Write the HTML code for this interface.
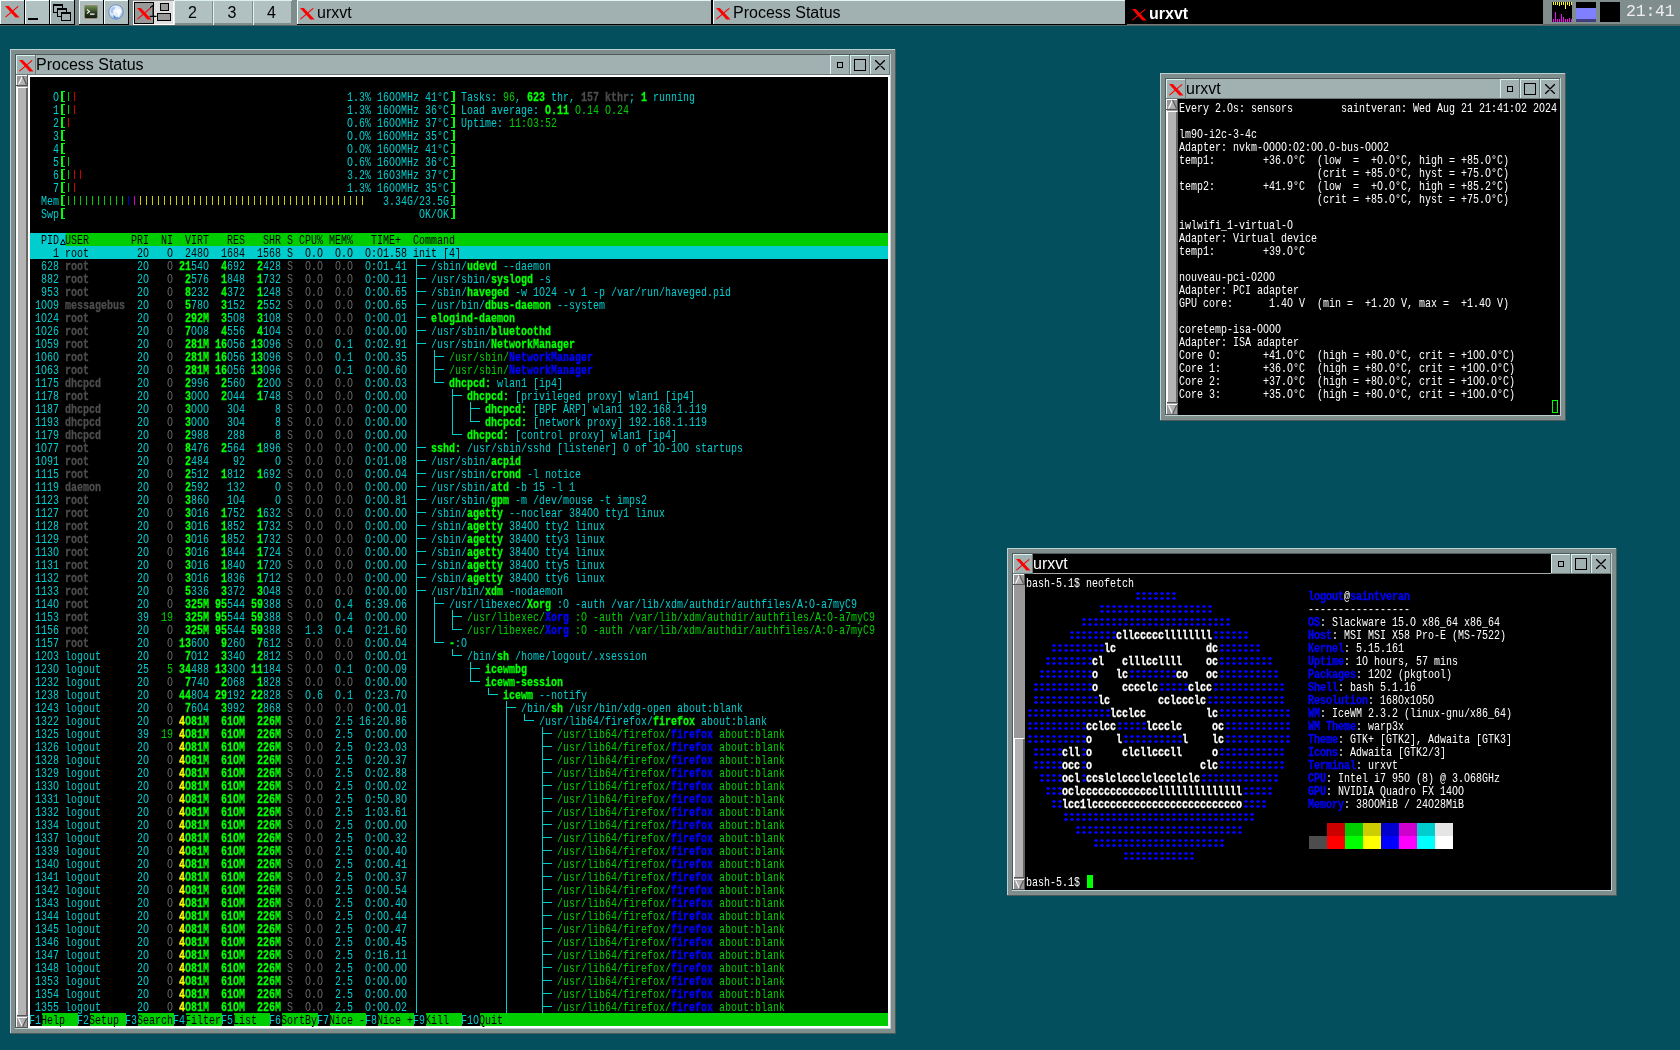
<!DOCTYPE html><html><head><meta charset="utf-8"><style>
*{margin:0;padding:0}
html,body{width:1680px;height:1050px;overflow:hidden;background:#034f5e;position:relative}
div{position:absolute}
svg{position:absolute}
.tt{font:16px/20px "Liberation Sans",sans-serif;white-space:pre;will-change:transform}
.tm{transform:scaleX(0.740620);transform-origin:0 0;font-family:"Liberation Mono",monospace;font-size:13.5px;line-height:13px;white-space:pre;width:1200px;height:1px}
.tm p{position:absolute;left:0;height:13px;margin:0}
.lbl{font:16px/24px "Liberation Sans",sans-serif;white-space:pre;text-align:center;will-change:transform}
</style></head><body><div style="left:0px;top:0px;width:1680px;height:25px;background:#7f8d8d;"></div><div style="left:0px;top:25px;width:1680px;height:1px;background:#566464;"></div><div style="left:0px;top:0px;width:25px;height:25px;background:#a3b3b3;"></div><div style="left:0px;top:0px;width:25px;height:1px;background:#f4ffff;"></div><div style="left:0px;top:0px;width:1px;height:25px;background:#f4ffff;"></div><div style="left:0px;top:24px;width:25px;height:1px;background:#000;"></div><div style="left:24px;top:0px;width:1px;height:25px;background:#000;"></div><svg style="position:absolute;left:5px;top:6px" width="16" height="12" viewBox="0 0 16 12"><polygon points="0,0 3.8,0 14.6,11.5 10.4,11.5" fill="#f00"/><line x1="0.4" y1="11.2" x2="13.2" y2="0.4" stroke="#f00" stroke-width="1.1"/></svg><div style="left:25px;top:0px;width:25px;height:25px;background:#b1c0c0;"></div><div style="left:25px;top:0px;width:25px;height:1px;background:#f4ffff;"></div><div style="left:25px;top:0px;width:1px;height:25px;background:#f4ffff;"></div><div style="left:25px;top:24px;width:25px;height:1px;background:#000;"></div><div style="left:49px;top:0px;width:1px;height:25px;background:#000;"></div><div style="left:28px;top:18px;width:10px;height:2px;background:#000;"></div><div style="left:50px;top:0px;width:25px;height:25px;background:#a1b1b1;"></div><div style="left:50px;top:0px;width:25px;height:1px;background:#f4ffff;"></div><div style="left:50px;top:0px;width:1px;height:25px;background:#f4ffff;"></div><div style="left:50px;top:24px;width:25px;height:1px;background:#000;"></div><div style="left:74px;top:0px;width:1px;height:25px;background:#000;"></div><div style="left:53px;top:4px;width:10px;height:9px;background:#a1b1b1;border:1px solid #000;border-top-width:2px;box-sizing:border-box"></div><div style="left:57px;top:8px;width:10px;height:9px;background:#a1b1b1;border:1px solid #000;border-top-width:2px;box-sizing:border-box"></div><div style="left:61px;top:12px;width:10px;height:9px;background:#a1b1b1;border:1px solid #000;border-top-width:2px;box-sizing:border-box"></div><div style="left:75px;top:0px;width:4px;height:25px;background:#7f8d8d;"></div><div style="left:79px;top:0px;width:25px;height:25px;background:#adbdbd;"></div><div style="left:79px;top:0px;width:25px;height:1px;background:#f4ffff;"></div><div style="left:79px;top:0px;width:1px;height:25px;background:#f4ffff;"></div><div style="left:79px;top:24px;width:25px;height:1px;background:#000;"></div><div style="left:103px;top:0px;width:1px;height:25px;background:#000;"></div><svg style="position:absolute;left:83px;top:4px" width="16" height="16" viewBox="0 0 16 16"><defs><linearGradient id="tg" x1="0" y1="0" x2="0" y2="1"><stop offset="0" stop-color="#6f8f52"/><stop offset="0.55" stop-color="#2c3d22"/><stop offset="1" stop-color="#141c10"/></linearGradient><radialGradient id="gg" cx="0.4" cy="0.35" r="0.7"><stop offset="0" stop-color="#ffffff"/><stop offset="0.6" stop-color="#d6e6f8"/><stop offset="1" stop-color="#8fb3e6"/></radialGradient></defs><rect x="0.5" y="0.5" width="15" height="15" rx="2.5" fill="#8a8a80" stroke="#bdbdb2" stroke-width="1"/><rect x="2" y="2" width="12" height="12" rx="1" fill="url(#tg)"/><path d="M4 5.5L6.5 7.5L4 9.5" stroke="#f4f4f4" stroke-width="1.1" fill="none"/><rect x="7" y="9.5" width="4.5" height="1.3" fill="#f4f4f4"/></svg><div style="left:104px;top:0px;width:25px;height:25px;background:#adbdbd;"></div><div style="left:104px;top:0px;width:25px;height:1px;background:#f4ffff;"></div><div style="left:104px;top:0px;width:1px;height:25px;background:#f4ffff;"></div><div style="left:104px;top:24px;width:25px;height:1px;background:#000;"></div><div style="left:128px;top:0px;width:1px;height:25px;background:#000;"></div><svg style="position:absolute;left:108px;top:4px" width="16" height="16" viewBox="0 0 16 16"><circle cx="8" cy="8" r="7.2" fill="url(#gg)" stroke="#6a90c8" stroke-width="1"/><path d="M3.2 4.5Q5 2.6 7.6 3.2L7 5.2L5.2 6.2L5.6 8.2L4.4 9.8L2.6 8.2Q2.4 6 3.2 4.5Z" fill="#a9c6ee"/><path d="M9.5 5.5L12.5 5L13.6 7.5L12.2 10L11 13L9.4 12.6L9.8 9.6L8.6 8.4Z" fill="#ffffff"/><path d="M5.5 10.5Q7.5 14.5 11 13.6Q8.6 15.4 5.5 13.6Z" fill="#3f7fd0"/></svg><div style="left:129px;top:0px;width:4px;height:25px;background:#7f8d8d;"></div><div style="left:133px;top:0px;width:41px;height:25px;background:#ffffff;"></div><div style="left:133px;top:0px;width:41px;height:1px;background:#999;"></div><div style="left:134px;top:1px;width:39px;height:23px;background:#e0e0e0;"></div><div style="left:134px;top:2px;width:20px;height:22px;background:#999;border:1px solid #000;box-sizing:border-box"></div><svg style="position:absolute;left:137px;top:8px" width="16" height="12" viewBox="0 0 16 12"><polygon points="0,0 3.8,0 14.6,11.5 10.4,11.5" fill="#f00"/><line x1="0.4" y1="11.2" x2="13.2" y2="0.4" stroke="#f00" stroke-width="1.1"/></svg><div class="lbl" style="left:146px;top:0px;width:14px;color:#000">1</div><div style="left:160px;top:3px;width:9px;height:8px;background:#999;border:1px solid #000;box-sizing:border-box"></div><div style="left:157px;top:13px;width:14px;height:8px;background:#999;border:1px solid #000;box-sizing:border-box"></div><div style="left:174px;top:0px;width:39px;height:25px;background:#dff0f0;"></div><div style="left:175px;top:1px;width:38px;height:24px;background:#7f8d8d;"></div><div style="left:175px;top:1px;width:37px;height:22px;background:#b1c0c0;"></div><div class="lbl" style="left:173px;top:1px;width:39px;color:#000">2</div><div style="left:213px;top:0px;width:40px;height:25px;background:#dff0f0;"></div><div style="left:214px;top:1px;width:39px;height:24px;background:#7f8d8d;"></div><div style="left:214px;top:1px;width:38px;height:22px;background:#b1c0c0;"></div><div class="lbl" style="left:212px;top:1px;width:40px;color:#000">3</div><div style="left:253px;top:0px;width:39px;height:25px;background:#dff0f0;"></div><div style="left:254px;top:1px;width:38px;height:24px;background:#7f8d8d;"></div><div style="left:254px;top:1px;width:37px;height:22px;background:#b1c0c0;"></div><div class="lbl" style="left:252px;top:1px;width:39px;color:#000">4</div><div style="left:292px;top:0px;width:5px;height:25px;background:#7f8d8d;"></div><div style="left:297px;top:0px;width:416px;height:25px;background:#a1b1b1;"></div><div style="left:297px;top:0px;width:416px;height:1px;background:#e4f4f4;"></div><div style="left:297px;top:0px;width:1px;height:25px;background:#f4ffff;"></div><div style="left:297px;top:24px;width:416px;height:1px;background:#000;"></div><div style="left:711px;top:0px;width:2px;height:25px;background:#000;"></div><svg style="position:absolute;left:300px;top:8px" width="16" height="12" viewBox="0 0 16 12"><polygon points="0,0 3.8,0 14.6,11.5 10.4,11.5" fill="#f00"/><line x1="0.4" y1="11.2" x2="13.2" y2="0.4" stroke="#f00" stroke-width="1.1"/></svg><div class="tt" style="left:317px;top:3px;color:#000">urxvt</div><div style="left:713px;top:0px;width:414px;height:25px;background:#a1b1b1;"></div><div style="left:713px;top:0px;width:414px;height:1px;background:#e4f4f4;"></div><div style="left:713px;top:0px;width:1px;height:25px;background:#f4ffff;"></div><div style="left:713px;top:24px;width:414px;height:1px;background:#000;"></div><div style="left:1125px;top:0px;width:2px;height:25px;background:#000;"></div><svg style="position:absolute;left:716px;top:8px" width="16" height="12" viewBox="0 0 16 12"><polygon points="0,0 3.8,0 14.6,11.5 10.4,11.5" fill="#f00"/><line x1="0.4" y1="11.2" x2="13.2" y2="0.4" stroke="#f00" stroke-width="1.1"/></svg><div class="tt" style="left:733px;top:3px;color:#000">Process Status</div><div style="left:1127px;top:0px;width:416px;height:25px;background:#000;"></div><div style="left:1127px;top:24px;width:416px;height:1px;background:#777;"></div><svg style="position:absolute;left:1132px;top:9px" width="16" height="12" viewBox="0 0 16 12"><polygon points="0,0 3.8,0 14.6,11.5 10.4,11.5" fill="#f00"/><line x1="0.4" y1="11.2" x2="13.2" y2="0.4" stroke="#f00" stroke-width="1.1"/></svg><div class="tt" style="left:1149px;top:4px;color:#fff;font-weight:bold">urxvt</div><div style="left:1543px;top:0px;width:137px;height:25px;background:#7f8d8d;"></div><div style="left:1543px;top:24px;width:137px;height:1px;background:#5a6666;"></div><div style="left:1552px;top:2px;width:20px;height:20px;background:#000;"></div><div style="left:1553px;top:2px;width:1px;height:3px;background:#ff0;"></div><div style="left:1555px;top:2px;width:1px;height:3px;background:#ff0;"></div><div style="left:1557px;top:2px;width:1px;height:3px;background:#ff0;"></div><div style="left:1559px;top:2px;width:1px;height:4px;background:#ff0;"></div><div style="left:1561px;top:2px;width:1px;height:3px;background:#ff0;"></div><div style="left:1563px;top:2px;width:1px;height:3px;background:#ff0;"></div><div style="left:1565px;top:2px;width:1px;height:7px;background:#ff0;"></div><div style="left:1567px;top:2px;width:1px;height:3px;background:#ff0;"></div><div style="left:1569px;top:2px;width:1px;height:4px;background:#ff0;"></div><div style="left:1571px;top:2px;width:1px;height:3px;background:#ff0;"></div><div style="left:1553px;top:19px;width:1px;height:3px;background:#f0f;"></div><div style="left:1555px;top:12px;width:1px;height:10px;background:#f0f;"></div><div style="left:1557px;top:19px;width:1px;height:3px;background:#f0f;"></div><div style="left:1559px;top:19px;width:1px;height:3px;background:#f0f;"></div><div style="left:1561px;top:14px;width:1px;height:8px;background:#f0f;"></div><div style="left:1563px;top:17px;width:1px;height:5px;background:#f0f;"></div><div style="left:1565px;top:19px;width:1px;height:3px;background:#f0f;"></div><div style="left:1567px;top:19px;width:1px;height:3px;background:#f0f;"></div><div style="left:1569px;top:18px;width:1px;height:4px;background:#f0f;"></div><div style="left:1571px;top:19px;width:1px;height:3px;background:#f0f;"></div><div style="left:1576px;top:2px;width:20px;height:20px;background:#000;"></div><div style="left:1576px;top:8px;width:20px;height:11px;background:#8080ff;"></div><div style="left:1576px;top:19px;width:20px;height:3px;background:#404080;"></div><div style="left:1600px;top:2px;width:20px;height:20px;background:#000;"></div><div style="left:1626px;top:0px;font:16.5px/24px 'Liberation Mono',monospace;color:#eeeeee;letter-spacing:-0.2px;will-change:transform">21:41</div><div style="left:10px;top:49px;width:886px;height:985px;background:#7f8d8d;"></div><div style="left:10px;top:49px;width:886px;height:1px;background:#bad2d2;"></div><div style="left:10px;top:49px;width:1px;height:985px;background:#bad2d2;"></div><div style="left:10px;top:1033px;width:886px;height:1px;background:#4f5b5b;"></div><div style="left:895px;top:49px;width:1px;height:985px;background:#4f5b5b;"></div><div style="left:15px;top:54px;width:876px;height:1px;background:#4f5b5b;"></div><div style="left:15px;top:54px;width:1px;height:975px;background:#4f5b5b;"></div><div style="left:15px;top:1028px;width:876px;height:1px;background:#bad2d2;"></div><div style="left:890px;top:54px;width:1px;height:975px;background:#bad2d2;"></div><div style="left:16px;top:55px;width:874px;height:20px;background:#a1b1b1;"></div><div style="left:16px;top:74px;width:874px;height:1px;background:#6c7a7a;"></div><div style="left:16px;top:55px;width:20px;height:20px;background:#a1b1b1;"></div><div style="left:16px;top:55px;width:20px;height:1px;background:#d9f2f2;"></div><div style="left:16px;top:55px;width:1px;height:20px;background:#d9f2f2;"></div><div style="left:16px;top:74px;width:20px;height:1px;background:#6c7a7a;"></div><div style="left:35px;top:55px;width:1px;height:20px;background:#6c7a7a;"></div><svg style="position:absolute;left:19px;top:60px" width="16" height="12" viewBox="0 0 16 12"><polygon points="0,0 3.8,0 14.6,11.5 10.4,11.5" fill="#f00"/><line x1="0.4" y1="11.2" x2="13.2" y2="0.4" stroke="#f00" stroke-width="1.1"/></svg><div class="tt" style="left:36px;top:55px;color:#000">Process Status</div><div style="left:830px;top:55px;width:20px;height:20px;background:#a1b1b1;"></div><div style="left:830px;top:55px;width:20px;height:1px;background:#d9f2f2;"></div><div style="left:830px;top:55px;width:1px;height:20px;background:#d9f2f2;"></div><div style="left:830px;top:74px;width:20px;height:1px;background:#6c7a7a;"></div><div style="left:849px;top:55px;width:1px;height:20px;background:#6c7a7a;"></div><div style="left:837px;top:62px;width:6px;height:6px;background:transparent;border:1.5px solid #000;box-sizing:border-box"></div><div style="left:850px;top:55px;width:20px;height:20px;background:#a1b1b1;"></div><div style="left:850px;top:55px;width:20px;height:1px;background:#d9f2f2;"></div><div style="left:850px;top:55px;width:1px;height:20px;background:#d9f2f2;"></div><div style="left:850px;top:74px;width:20px;height:1px;background:#6c7a7a;"></div><div style="left:869px;top:55px;width:1px;height:20px;background:#6c7a7a;"></div><div style="left:854px;top:59px;width:12px;height:12px;background:transparent;border:1.5px solid #000;box-sizing:border-box"></div><div style="left:870px;top:55px;width:20px;height:20px;background:#a1b1b1;"></div><div style="left:870px;top:55px;width:20px;height:1px;background:#d9f2f2;"></div><div style="left:870px;top:55px;width:1px;height:20px;background:#d9f2f2;"></div><div style="left:870px;top:74px;width:20px;height:1px;background:#6c7a7a;"></div><div style="left:889px;top:55px;width:1px;height:20px;background:#6c7a7a;"></div><svg style="position:absolute;left:875px;top:60px" width="10" height="10" viewBox="0 0 10 10"><path d="M0.5 0.5L9.5 9.5M9.5 0.5L0.5 9.5" stroke="#000" stroke-width="1.4" stroke-linecap="round"/></svg><div style="left:16px;top:75px;width:874px;height:953px;background:#fff;"></div><div style="left:16px;top:75px;width:12px;height:953px;background:#999999;"></div><div style="left:16px;top:75px;width:1px;height:953px;background:#fff;"></div><div style="left:16px;top:75px;width:12px;height:1px;background:#fff;"></div><div style="left:27px;top:75px;width:1px;height:11px;background:#555555;"></div><div style="left:16px;top:85px;width:12px;height:1px;background:#555555;"></div><svg style="position:absolute;left:16px;top:75px" width="12" height="11" viewBox="0 0 12 11"><polygon points="6.5,1 10.5,9.5 2.5,9.5" fill="#b4b4b4"/><path d="M6.5 1L2.5 9.5" stroke="#fff" stroke-width="1.1"/><path d="M6.5 1L10.5 9.5" stroke="#555555" stroke-width="1.1"/></svg><div style="left:16px;top:1017px;width:12px;height:1px;background:#fff;"></div><div style="left:27px;top:1017px;width:1px;height:11px;background:#555555;"></div><div style="left:16px;top:1027px;width:12px;height:1px;background:#555555;"></div><svg style="position:absolute;left:16px;top:1017px" width="12" height="11" viewBox="0 0 12 11"><polygon points="2.5,1.5 10.5,1.5 6.5,10" fill="#b4b4b4"/><path d="M2.5 1.5L6.5 10" stroke="#fff" stroke-width="1.1"/><path d="M10.5 1.5L6.5 10" stroke="#555555" stroke-width="1.1"/></svg><div style="left:17px;top:87px;width:11px;height:929px;background:#b4b4b4;"></div><div style="left:26px;top:88px;width:2px;height:928px;background:#666;"></div><div style="left:17px;top:87px;width:10px;height:1px;background:#fff;"></div><div style="left:17px;top:87px;width:1px;height:929px;background:#fff;"></div><div style="left:17px;top:1015px;width:11px;height:1px;background:#555555;"></div><div style="left:30px;top:77px;width:858px;height:949px;background:#000;"></div><div style="left:1160px;top:73px;width:406px;height:348px;background:#7f8d8d;"></div><div style="left:1160px;top:73px;width:406px;height:1px;background:#bad2d2;"></div><div style="left:1160px;top:73px;width:1px;height:348px;background:#bad2d2;"></div><div style="left:1160px;top:420px;width:406px;height:1px;background:#4f5b5b;"></div><div style="left:1565px;top:73px;width:1px;height:348px;background:#4f5b5b;"></div><div style="left:1165px;top:78px;width:396px;height:1px;background:#4f5b5b;"></div><div style="left:1165px;top:78px;width:1px;height:338px;background:#4f5b5b;"></div><div style="left:1165px;top:415px;width:396px;height:1px;background:#bad2d2;"></div><div style="left:1560px;top:78px;width:1px;height:338px;background:#bad2d2;"></div><div style="left:1166px;top:79px;width:394px;height:20px;background:#a1b1b1;"></div><div style="left:1166px;top:98px;width:394px;height:1px;background:#6c7a7a;"></div><div style="left:1166px;top:79px;width:20px;height:20px;background:#a1b1b1;"></div><div style="left:1166px;top:79px;width:20px;height:1px;background:#d9f2f2;"></div><div style="left:1166px;top:79px;width:1px;height:20px;background:#d9f2f2;"></div><div style="left:1166px;top:98px;width:20px;height:1px;background:#6c7a7a;"></div><div style="left:1185px;top:79px;width:1px;height:20px;background:#6c7a7a;"></div><svg style="position:absolute;left:1169px;top:84px" width="16" height="12" viewBox="0 0 16 12"><polygon points="0,0 3.8,0 14.6,11.5 10.4,11.5" fill="#f00"/><line x1="0.4" y1="11.2" x2="13.2" y2="0.4" stroke="#f00" stroke-width="1.1"/></svg><div class="tt" style="left:1186px;top:79px;color:#000">urxvt</div><div style="left:1500px;top:79px;width:20px;height:20px;background:#a1b1b1;"></div><div style="left:1500px;top:79px;width:20px;height:1px;background:#d9f2f2;"></div><div style="left:1500px;top:79px;width:1px;height:20px;background:#d9f2f2;"></div><div style="left:1500px;top:98px;width:20px;height:1px;background:#6c7a7a;"></div><div style="left:1519px;top:79px;width:1px;height:20px;background:#6c7a7a;"></div><div style="left:1507px;top:86px;width:6px;height:6px;background:transparent;border:1.5px solid #000;box-sizing:border-box"></div><div style="left:1520px;top:79px;width:20px;height:20px;background:#a1b1b1;"></div><div style="left:1520px;top:79px;width:20px;height:1px;background:#d9f2f2;"></div><div style="left:1520px;top:79px;width:1px;height:20px;background:#d9f2f2;"></div><div style="left:1520px;top:98px;width:20px;height:1px;background:#6c7a7a;"></div><div style="left:1539px;top:79px;width:1px;height:20px;background:#6c7a7a;"></div><div style="left:1524px;top:83px;width:12px;height:12px;background:transparent;border:1.5px solid #000;box-sizing:border-box"></div><div style="left:1540px;top:79px;width:20px;height:20px;background:#a1b1b1;"></div><div style="left:1540px;top:79px;width:20px;height:1px;background:#d9f2f2;"></div><div style="left:1540px;top:79px;width:1px;height:20px;background:#d9f2f2;"></div><div style="left:1540px;top:98px;width:20px;height:1px;background:#6c7a7a;"></div><div style="left:1559px;top:79px;width:1px;height:20px;background:#6c7a7a;"></div><svg style="position:absolute;left:1545px;top:84px" width="10" height="10" viewBox="0 0 10 10"><path d="M0.5 0.5L9.5 9.5M9.5 0.5L0.5 9.5" stroke="#000" stroke-width="1.4" stroke-linecap="round"/></svg><div style="left:1166px;top:99px;width:394px;height:316px;background:#000;"></div><div style="left:1166px;top:99px;width:12px;height:316px;background:#999999;"></div><div style="left:1166px;top:99px;width:1px;height:316px;background:#fff;"></div><div style="left:1166px;top:99px;width:12px;height:1px;background:#fff;"></div><div style="left:1177px;top:99px;width:1px;height:11px;background:#555555;"></div><div style="left:1166px;top:109px;width:12px;height:1px;background:#555555;"></div><svg style="position:absolute;left:1166px;top:99px" width="12" height="11" viewBox="0 0 12 11"><polygon points="6.5,1 10.5,9.5 2.5,9.5" fill="#b4b4b4"/><path d="M6.5 1L2.5 9.5" stroke="#fff" stroke-width="1.1"/><path d="M6.5 1L10.5 9.5" stroke="#555555" stroke-width="1.1"/></svg><div style="left:1166px;top:404px;width:12px;height:1px;background:#fff;"></div><div style="left:1177px;top:404px;width:1px;height:11px;background:#555555;"></div><div style="left:1166px;top:414px;width:12px;height:1px;background:#555555;"></div><svg style="position:absolute;left:1166px;top:404px" width="12" height="11" viewBox="0 0 12 11"><polygon points="2.5,1.5 10.5,1.5 6.5,10" fill="#b4b4b4"/><path d="M2.5 1.5L6.5 10" stroke="#fff" stroke-width="1.1"/><path d="M10.5 1.5L6.5 10" stroke="#555555" stroke-width="1.1"/></svg><div style="left:1167px;top:111px;width:11px;height:292px;background:#b4b4b4;"></div><div style="left:1176px;top:112px;width:2px;height:291px;background:#666;"></div><div style="left:1167px;top:111px;width:10px;height:1px;background:#fff;"></div><div style="left:1167px;top:111px;width:1px;height:292px;background:#fff;"></div><div style="left:1167px;top:402px;width:11px;height:1px;background:#555555;"></div><div style="left:1007px;top:548px;width:610px;height:348px;background:#7f8d8d;"></div><div style="left:1007px;top:548px;width:610px;height:1px;background:#bad2d2;"></div><div style="left:1007px;top:548px;width:1px;height:348px;background:#bad2d2;"></div><div style="left:1007px;top:895px;width:610px;height:1px;background:#4f5b5b;"></div><div style="left:1616px;top:548px;width:1px;height:348px;background:#4f5b5b;"></div><div style="left:1012px;top:553px;width:600px;height:1px;background:#4f5b5b;"></div><div style="left:1012px;top:553px;width:1px;height:338px;background:#4f5b5b;"></div><div style="left:1012px;top:890px;width:600px;height:1px;background:#bad2d2;"></div><div style="left:1611px;top:553px;width:1px;height:338px;background:#bad2d2;"></div><div style="left:1013px;top:554px;width:598px;height:20px;background:#000;"></div><div style="left:1013px;top:573px;width:598px;height:1px;background:#a8a8a8;"></div><div style="left:1013px;top:554px;width:20px;height:20px;background:#a1b1b1;"></div><div style="left:1013px;top:554px;width:20px;height:1px;background:#d9f2f2;"></div><div style="left:1013px;top:554px;width:1px;height:20px;background:#d9f2f2;"></div><div style="left:1013px;top:573px;width:20px;height:1px;background:#6c7a7a;"></div><div style="left:1032px;top:554px;width:1px;height:20px;background:#6c7a7a;"></div><svg style="position:absolute;left:1016px;top:559px" width="16" height="12" viewBox="0 0 16 12"><polygon points="0,0 3.8,0 14.6,11.5 10.4,11.5" fill="#f00"/><line x1="0.4" y1="11.2" x2="13.2" y2="0.4" stroke="#f00" stroke-width="1.1"/></svg><div class="tt" style="left:1033px;top:554px;color:#fff">urxvt</div><div style="left:1551px;top:554px;width:20px;height:20px;background:#a1b1b1;"></div><div style="left:1551px;top:554px;width:20px;height:1px;background:#d9f2f2;"></div><div style="left:1551px;top:554px;width:1px;height:20px;background:#d9f2f2;"></div><div style="left:1551px;top:573px;width:20px;height:1px;background:#6c7a7a;"></div><div style="left:1570px;top:554px;width:1px;height:20px;background:#6c7a7a;"></div><div style="left:1558px;top:561px;width:6px;height:6px;background:transparent;border:1.5px solid #000;box-sizing:border-box"></div><div style="left:1571px;top:554px;width:20px;height:20px;background:#a1b1b1;"></div><div style="left:1571px;top:554px;width:20px;height:1px;background:#d9f2f2;"></div><div style="left:1571px;top:554px;width:1px;height:20px;background:#d9f2f2;"></div><div style="left:1571px;top:573px;width:20px;height:1px;background:#6c7a7a;"></div><div style="left:1590px;top:554px;width:1px;height:20px;background:#6c7a7a;"></div><div style="left:1575px;top:558px;width:12px;height:12px;background:transparent;border:1.5px solid #000;box-sizing:border-box"></div><div style="left:1591px;top:554px;width:20px;height:20px;background:#a1b1b1;"></div><div style="left:1591px;top:554px;width:20px;height:1px;background:#d9f2f2;"></div><div style="left:1591px;top:554px;width:1px;height:20px;background:#d9f2f2;"></div><div style="left:1591px;top:573px;width:20px;height:1px;background:#6c7a7a;"></div><div style="left:1610px;top:554px;width:1px;height:20px;background:#6c7a7a;"></div><svg style="position:absolute;left:1596px;top:559px" width="10" height="10" viewBox="0 0 10 10"><path d="M0.5 0.5L9.5 9.5M9.5 0.5L0.5 9.5" stroke="#000" stroke-width="1.4" stroke-linecap="round"/></svg><div style="left:1013px;top:574px;width:598px;height:316px;background:#000;"></div><div style="left:1013px;top:574px;width:12px;height:316px;background:#999999;"></div><div style="left:1013px;top:574px;width:1px;height:316px;background:#fff;"></div><div style="left:1013px;top:574px;width:12px;height:1px;background:#fff;"></div><div style="left:1024px;top:574px;width:1px;height:11px;background:#555555;"></div><div style="left:1013px;top:584px;width:12px;height:1px;background:#555555;"></div><svg style="position:absolute;left:1013px;top:574px" width="12" height="11" viewBox="0 0 12 11"><polygon points="6.5,1 10.5,9.5 2.5,9.5" fill="#b4b4b4"/><path d="M6.5 1L2.5 9.5" stroke="#fff" stroke-width="1.1"/><path d="M6.5 1L10.5 9.5" stroke="#555555" stroke-width="1.1"/></svg><div style="left:1013px;top:879px;width:12px;height:1px;background:#fff;"></div><div style="left:1024px;top:879px;width:1px;height:11px;background:#555555;"></div><div style="left:1013px;top:889px;width:12px;height:1px;background:#555555;"></div><svg style="position:absolute;left:1013px;top:879px" width="12" height="11" viewBox="0 0 12 11"><polygon points="2.5,1.5 10.5,1.5 6.5,10" fill="#b4b4b4"/><path d="M2.5 1.5L6.5 10" stroke="#fff" stroke-width="1.1"/><path d="M10.5 1.5L6.5 10" stroke="#555555" stroke-width="1.1"/></svg><div style="left:1014px;top:738px;width:11px;height:140px;background:#b4b4b4;"></div><div style="left:1023px;top:739px;width:2px;height:139px;background:#666;"></div><div style="left:1014px;top:738px;width:10px;height:1px;background:#fff;"></div><div style="left:1014px;top:738px;width:1px;height:140px;background:#fff;"></div><div style="left:1014px;top:877px;width:11px;height:1px;background:#555555;"></div><div style="left:68px;top:92px;width:1px;height:9px;background:#00cd00;"></div><div style="left:74px;top:92px;width:1px;height:9px;background:#cd0000;"></div><div style="left:68px;top:105px;width:1px;height:9px;background:#00cd00;"></div><div style="left:74px;top:105px;width:1px;height:9px;background:#cd0000;"></div><div style="left:68px;top:118px;width:1px;height:9px;background:#cd0000;"></div><div style="left:68px;top:157px;width:1px;height:9px;background:#00cd00;"></div><div style="left:68px;top:170px;width:1px;height:9px;background:#00cd00;"></div><div style="left:74px;top:170px;width:1px;height:9px;background:#cd0000;"></div><div style="left:80px;top:170px;width:1px;height:9px;background:#cd0000;"></div><div style="left:68px;top:183px;width:1px;height:9px;background:#00cd00;"></div><div style="left:74px;top:183px;width:1px;height:9px;background:#cd0000;"></div><div style="left:68px;top:196px;width:1px;height:9px;background:#00cd00;"></div><div style="left:74px;top:196px;width:1px;height:9px;background:#00cd00;"></div><div style="left:80px;top:196px;width:1px;height:9px;background:#00cd00;"></div><div style="left:86px;top:196px;width:1px;height:9px;background:#00cd00;"></div><div style="left:92px;top:196px;width:1px;height:9px;background:#00cd00;"></div><div style="left:98px;top:196px;width:1px;height:9px;background:#00cd00;"></div><div style="left:104px;top:196px;width:1px;height:9px;background:#00cd00;"></div><div style="left:110px;top:196px;width:1px;height:9px;background:#00cd00;"></div><div style="left:116px;top:196px;width:1px;height:9px;background:#00cd00;"></div><div style="left:122px;top:196px;width:1px;height:9px;background:#00cd00;"></div><div style="left:128px;top:196px;width:1px;height:9px;background:#0000cd;"></div><div style="left:134px;top:196px;width:1px;height:9px;background:#cd00cd;"></div><div style="left:140px;top:196px;width:1px;height:9px;background:#cdcd00;"></div><div style="left:146px;top:196px;width:1px;height:9px;background:#cdcd00;"></div><div style="left:152px;top:196px;width:1px;height:9px;background:#cdcd00;"></div><div style="left:158px;top:196px;width:1px;height:9px;background:#cdcd00;"></div><div style="left:164px;top:196px;width:1px;height:9px;background:#cdcd00;"></div><div style="left:170px;top:196px;width:1px;height:9px;background:#cdcd00;"></div><div style="left:176px;top:196px;width:1px;height:9px;background:#cdcd00;"></div><div style="left:182px;top:196px;width:1px;height:9px;background:#cdcd00;"></div><div style="left:188px;top:196px;width:1px;height:9px;background:#cdcd00;"></div><div style="left:194px;top:196px;width:1px;height:9px;background:#cdcd00;"></div><div style="left:200px;top:196px;width:1px;height:9px;background:#cdcd00;"></div><div style="left:206px;top:196px;width:1px;height:9px;background:#cdcd00;"></div><div style="left:212px;top:196px;width:1px;height:9px;background:#cdcd00;"></div><div style="left:218px;top:196px;width:1px;height:9px;background:#cdcd00;"></div><div style="left:224px;top:196px;width:1px;height:9px;background:#cdcd00;"></div><div style="left:230px;top:196px;width:1px;height:9px;background:#cdcd00;"></div><div style="left:236px;top:196px;width:1px;height:9px;background:#cdcd00;"></div><div style="left:242px;top:196px;width:1px;height:9px;background:#cdcd00;"></div><div style="left:248px;top:196px;width:1px;height:9px;background:#cdcd00;"></div><div style="left:254px;top:196px;width:1px;height:9px;background:#cdcd00;"></div><div style="left:260px;top:196px;width:1px;height:9px;background:#cdcd00;"></div><div style="left:266px;top:196px;width:1px;height:9px;background:#cdcd00;"></div><div style="left:272px;top:196px;width:1px;height:9px;background:#cdcd00;"></div><div style="left:278px;top:196px;width:1px;height:9px;background:#cdcd00;"></div><div style="left:284px;top:196px;width:1px;height:9px;background:#cdcd00;"></div><div style="left:290px;top:196px;width:1px;height:9px;background:#cdcd00;"></div><div style="left:296px;top:196px;width:1px;height:9px;background:#cdcd00;"></div><div style="left:302px;top:196px;width:1px;height:9px;background:#cdcd00;"></div><div style="left:308px;top:196px;width:1px;height:9px;background:#cdcd00;"></div><div style="left:314px;top:196px;width:1px;height:9px;background:#cdcd00;"></div><div style="left:320px;top:196px;width:1px;height:9px;background:#cdcd00;"></div><div style="left:326px;top:196px;width:1px;height:9px;background:#cdcd00;"></div><div style="left:332px;top:196px;width:1px;height:9px;background:#cdcd00;"></div><div style="left:338px;top:196px;width:1px;height:9px;background:#cdcd00;"></div><div style="left:344px;top:196px;width:1px;height:9px;background:#cdcd00;"></div><div style="left:350px;top:196px;width:1px;height:9px;background:#cdcd00;"></div><div style="left:356px;top:196px;width:1px;height:9px;background:#cdcd00;"></div><div style="left:362px;top:196px;width:1px;height:9px;background:#cdcd00;"></div><div style="left:61px;top:91px;width:4px;height:1px;background:#00ff00;"></div><div style="left:61px;top:101px;width:4px;height:1px;background:#00ff00;"></div><div style="left:61px;top:91px;width:2px;height:11px;background:#00ff00;"></div><div style="left:451px;top:91px;width:4px;height:1px;background:#00ff00;"></div><div style="left:451px;top:101px;width:4px;height:1px;background:#00ff00;"></div><div style="left:453px;top:91px;width:2px;height:11px;background:#00ff00;"></div><div style="left:61px;top:104px;width:4px;height:1px;background:#00ff00;"></div><div style="left:61px;top:114px;width:4px;height:1px;background:#00ff00;"></div><div style="left:61px;top:104px;width:2px;height:11px;background:#00ff00;"></div><div style="left:451px;top:104px;width:4px;height:1px;background:#00ff00;"></div><div style="left:451px;top:114px;width:4px;height:1px;background:#00ff00;"></div><div style="left:453px;top:104px;width:2px;height:11px;background:#00ff00;"></div><div style="left:61px;top:117px;width:4px;height:1px;background:#00ff00;"></div><div style="left:61px;top:127px;width:4px;height:1px;background:#00ff00;"></div><div style="left:61px;top:117px;width:2px;height:11px;background:#00ff00;"></div><div style="left:451px;top:117px;width:4px;height:1px;background:#00ff00;"></div><div style="left:451px;top:127px;width:4px;height:1px;background:#00ff00;"></div><div style="left:453px;top:117px;width:2px;height:11px;background:#00ff00;"></div><div style="left:61px;top:130px;width:4px;height:1px;background:#00ff00;"></div><div style="left:61px;top:140px;width:4px;height:1px;background:#00ff00;"></div><div style="left:61px;top:130px;width:2px;height:11px;background:#00ff00;"></div><div style="left:451px;top:130px;width:4px;height:1px;background:#00ff00;"></div><div style="left:451px;top:140px;width:4px;height:1px;background:#00ff00;"></div><div style="left:453px;top:130px;width:2px;height:11px;background:#00ff00;"></div><div style="left:61px;top:143px;width:4px;height:1px;background:#00ff00;"></div><div style="left:61px;top:153px;width:4px;height:1px;background:#00ff00;"></div><div style="left:61px;top:143px;width:2px;height:11px;background:#00ff00;"></div><div style="left:451px;top:143px;width:4px;height:1px;background:#00ff00;"></div><div style="left:451px;top:153px;width:4px;height:1px;background:#00ff00;"></div><div style="left:453px;top:143px;width:2px;height:11px;background:#00ff00;"></div><div style="left:61px;top:156px;width:4px;height:1px;background:#00ff00;"></div><div style="left:61px;top:166px;width:4px;height:1px;background:#00ff00;"></div><div style="left:61px;top:156px;width:2px;height:11px;background:#00ff00;"></div><div style="left:451px;top:156px;width:4px;height:1px;background:#00ff00;"></div><div style="left:451px;top:166px;width:4px;height:1px;background:#00ff00;"></div><div style="left:453px;top:156px;width:2px;height:11px;background:#00ff00;"></div><div style="left:61px;top:169px;width:4px;height:1px;background:#00ff00;"></div><div style="left:61px;top:179px;width:4px;height:1px;background:#00ff00;"></div><div style="left:61px;top:169px;width:2px;height:11px;background:#00ff00;"></div><div style="left:451px;top:169px;width:4px;height:1px;background:#00ff00;"></div><div style="left:451px;top:179px;width:4px;height:1px;background:#00ff00;"></div><div style="left:453px;top:169px;width:2px;height:11px;background:#00ff00;"></div><div style="left:61px;top:182px;width:4px;height:1px;background:#00ff00;"></div><div style="left:61px;top:192px;width:4px;height:1px;background:#00ff00;"></div><div style="left:61px;top:182px;width:2px;height:11px;background:#00ff00;"></div><div style="left:451px;top:182px;width:4px;height:1px;background:#00ff00;"></div><div style="left:451px;top:192px;width:4px;height:1px;background:#00ff00;"></div><div style="left:453px;top:182px;width:2px;height:11px;background:#00ff00;"></div><div style="left:61px;top:195px;width:4px;height:1px;background:#00ff00;"></div><div style="left:61px;top:205px;width:4px;height:1px;background:#00ff00;"></div><div style="left:61px;top:195px;width:2px;height:11px;background:#00ff00;"></div><div style="left:451px;top:195px;width:4px;height:1px;background:#00ff00;"></div><div style="left:451px;top:205px;width:4px;height:1px;background:#00ff00;"></div><div style="left:453px;top:195px;width:2px;height:11px;background:#00ff00;"></div><div style="left:61px;top:208px;width:4px;height:1px;background:#00ff00;"></div><div style="left:61px;top:218px;width:4px;height:1px;background:#00ff00;"></div><div style="left:61px;top:208px;width:2px;height:11px;background:#00ff00;"></div><div style="left:451px;top:208px;width:4px;height:1px;background:#00ff00;"></div><div style="left:451px;top:218px;width:4px;height:1px;background:#00ff00;"></div><div style="left:453px;top:208px;width:2px;height:11px;background:#00ff00;"></div><div style="left:30px;top:233px;width:858px;height:13px;background:#00cd00;"></div><div style="left:30px;top:233px;width:36px;height:13px;background:#00cdcd;"></div><svg style="position:absolute;left:60px;top:233px" width="6" height="13" viewBox="0 0 6 13"><path d="M0.5 11.5L3 6.5L5.5 11.5Z" fill="none" stroke="#000" stroke-width="1"/></svg><div style="left:30px;top:246px;width:858px;height:13px;background:#00cdcd;"></div><div style="left:30px;top:1013px;width:858px;height:13px;background:#00cd00;"></div><div style="left:30px;top:1013px;width:12px;height:13px;background:#000;"></div><div style="left:78px;top:1013px;width:12px;height:13px;background:#000;"></div><div style="left:126px;top:1013px;width:12px;height:13px;background:#000;"></div><div style="left:174px;top:1013px;width:12px;height:13px;background:#000;"></div><div style="left:222px;top:1013px;width:12px;height:13px;background:#000;"></div><div style="left:270px;top:1013px;width:12px;height:13px;background:#000;"></div><div style="left:318px;top:1013px;width:12px;height:13px;background:#000;"></div><div style="left:366px;top:1013px;width:12px;height:13px;background:#000;"></div><div style="left:414px;top:1013px;width:12px;height:13px;background:#000;"></div><div style="left:462px;top:1013px;width:18px;height:13px;background:#000;"></div><div class="tm" style="left:29px;top:77px"><p style="top:14px">    <span style="color:#00cdcd">O                                                1.3% 16OOMHz 41°C  Tasks: </span><span style="color:#00cd00">96</span><span style="color:#00cdcd">, </span><span style="color:#00ff00;font-weight:bold;-webkit-text-stroke:0.3px">623 </span><span style="color:#00cdcd">thr, </span><span style="color:#4d4d4d;font-weight:bold;-webkit-text-stroke:0.3px">157 kthr</span><span style="color:#00cdcd">; </span><span style="color:#00ff00;font-weight:bold;-webkit-text-stroke:0.3px">1 </span><span style="color:#00cdcd">running</span></p><p style="top:27px">    <span style="color:#00cdcd">1                                                1.3% 16OOMHz 36°C  Load average: </span><span style="color:#00ff00;font-weight:bold;-webkit-text-stroke:0.3px">O.11 </span><span style="color:#00cd00">O.14 O.24</span></p><p style="top:40px">    <span style="color:#00cdcd">2                                                O.6% 16OOMHz 37°C  Uptime: </span><span style="color:#00cd00">11:O3:52</span></p><p style="top:53px">    <span style="color:#00cdcd">3                                                O.O% 16OOMHz 35°C</span></p><p style="top:66px">    <span style="color:#00cdcd">4                                                O.O% 16OOMHz 41°C</span></p><p style="top:79px">    <span style="color:#00cdcd">5                                                O.6% 16OOMHz 36°C</span></p><p style="top:92px">    <span style="color:#00cdcd">6                                                3.2% 16O3MHz 37°C</span></p><p style="top:105px">    <span style="color:#00cdcd">7                                                1.3% 16OOMHz 35°C</span></p><p style="top:118px">  <span style="color:#00cdcd">Mem                                                      3.34G/23.5G</span></p><p style="top:131px">  <span style="color:#00cdcd">Swp                                                            OK/OK</span></p><p style="top:157px">  <span style="color:#000000">PID USER       PRI  NI  VIRT   RES   SHR S CPU% MEM%   TIME+  Command</span></p><p style="top:170px">    <span style="color:#000000">1 root        2O   O  248O  1684  1568 S  O.O  O.O  O:O1.58 init [4]</span></p><p style="top:183px">  <span style="color:#00cdcd">628 </span><span style="color:#4d4d4d;font-weight:bold;-webkit-text-stroke:0.3px">root        </span><span style="color:#00cdcd">2O   </span><span style="color:#666666">O </span><span style="color:#00ff00;font-weight:bold;-webkit-text-stroke:0.3px">21</span><span style="color:#00cdcd">54O  </span><span style="color:#00ff00;font-weight:bold;-webkit-text-stroke:0.3px">4</span><span style="color:#00cdcd">692  </span><span style="color:#00ff00;font-weight:bold;-webkit-text-stroke:0.3px">2</span><span style="color:#00cdcd">428 </span><span style="color:#666666">S  O.O  O.O  </span><span style="color:#00cdcd">O:O1.41    /sbin/</span><span style="color:#00ff00;font-weight:bold;-webkit-text-stroke:0.3px">udevd </span><span style="color:#00cdcd">--daemon</span></p><p style="top:196px">  <span style="color:#00cdcd">882 </span><span style="color:#4d4d4d;font-weight:bold;-webkit-text-stroke:0.3px">root        </span><span style="color:#00cdcd">2O   </span><span style="color:#666666">O  </span><span style="color:#00ff00;font-weight:bold;-webkit-text-stroke:0.3px">2</span><span style="color:#00cdcd">576  </span><span style="color:#00ff00;font-weight:bold;-webkit-text-stroke:0.3px">1</span><span style="color:#00cdcd">848  </span><span style="color:#00ff00;font-weight:bold;-webkit-text-stroke:0.3px">1</span><span style="color:#00cdcd">732 </span><span style="color:#666666">S  O.O  O.O  </span><span style="color:#00cdcd">O:OO.11    /usr/sbin/</span><span style="color:#00ff00;font-weight:bold;-webkit-text-stroke:0.3px">syslogd </span><span style="color:#00cdcd">-s</span></p><p style="top:209px">  <span style="color:#00cdcd">953 </span><span style="color:#4d4d4d;font-weight:bold;-webkit-text-stroke:0.3px">root        </span><span style="color:#00cdcd">2O   </span><span style="color:#666666">O  </span><span style="color:#00ff00;font-weight:bold;-webkit-text-stroke:0.3px">8</span><span style="color:#00cdcd">232  </span><span style="color:#00ff00;font-weight:bold;-webkit-text-stroke:0.3px">4</span><span style="color:#00cdcd">372  </span><span style="color:#00ff00;font-weight:bold;-webkit-text-stroke:0.3px">1</span><span style="color:#00cdcd">248 </span><span style="color:#666666">S  O.O  O.O  </span><span style="color:#00cdcd">O:OO.65    /sbin/</span><span style="color:#00ff00;font-weight:bold;-webkit-text-stroke:0.3px">haveged </span><span style="color:#00cdcd">-w 1O24 -v 1 -p /var/run/haveged.pid</span></p><p style="top:222px"> <span style="color:#00cdcd">1OO9 </span><span style="color:#4d4d4d;font-weight:bold;-webkit-text-stroke:0.3px">messagebus  </span><span style="color:#00cdcd">2O   </span><span style="color:#666666">O  </span><span style="color:#00ff00;font-weight:bold;-webkit-text-stroke:0.3px">5</span><span style="color:#00cdcd">78O  </span><span style="color:#00ff00;font-weight:bold;-webkit-text-stroke:0.3px">3</span><span style="color:#00cdcd">152  </span><span style="color:#00ff00;font-weight:bold;-webkit-text-stroke:0.3px">2</span><span style="color:#00cdcd">552 </span><span style="color:#666666">S  O.O  O.O  </span><span style="color:#00cdcd">O:OO.65    /usr/bin/</span><span style="color:#00ff00;font-weight:bold;-webkit-text-stroke:0.3px">dbus-daemon </span><span style="color:#00cdcd">--system</span></p><p style="top:235px"> <span style="color:#00cdcd">1O24 </span><span style="color:#4d4d4d;font-weight:bold;-webkit-text-stroke:0.3px">root        </span><span style="color:#00cdcd">2O   </span><span style="color:#666666">O  </span><span style="color:#00ff00;font-weight:bold;-webkit-text-stroke:0.3px">292M  3</span><span style="color:#00cdcd">5O8  </span><span style="color:#00ff00;font-weight:bold;-webkit-text-stroke:0.3px">3</span><span style="color:#00cdcd">1O8 </span><span style="color:#666666">S  O.O  O.O  </span><span style="color:#00cdcd">O:OO.O1    </span><span style="color:#00ff00;font-weight:bold;-webkit-text-stroke:0.3px">elogind-daemon</span></p><p style="top:248px"> <span style="color:#00cdcd">1O26 </span><span style="color:#4d4d4d;font-weight:bold;-webkit-text-stroke:0.3px">root        </span><span style="color:#00cdcd">2O   </span><span style="color:#666666">O  </span><span style="color:#00ff00;font-weight:bold;-webkit-text-stroke:0.3px">7</span><span style="color:#00cdcd">OO8  </span><span style="color:#00ff00;font-weight:bold;-webkit-text-stroke:0.3px">4</span><span style="color:#00cdcd">556  </span><span style="color:#00ff00;font-weight:bold;-webkit-text-stroke:0.3px">4</span><span style="color:#00cdcd">1O4 </span><span style="color:#666666">S  O.O  O.O  </span><span style="color:#00cdcd">O:OO.OO    /usr/sbin/</span><span style="color:#00ff00;font-weight:bold;-webkit-text-stroke:0.3px">bluetoothd</span></p><p style="top:261px"> <span style="color:#00cdcd">1O59 </span><span style="color:#4d4d4d;font-weight:bold;-webkit-text-stroke:0.3px">root        </span><span style="color:#00cdcd">2O   </span><span style="color:#666666">O  </span><span style="color:#00ff00;font-weight:bold;-webkit-text-stroke:0.3px">281M 16</span><span style="color:#00cdcd">O56 </span><span style="color:#00ff00;font-weight:bold;-webkit-text-stroke:0.3px">13</span><span style="color:#00cdcd">O96 </span><span style="color:#666666">S  O.O  </span><span style="color:#00cdcd">O.1  O:O2.91    /usr/sbin/</span><span style="color:#00ff00;font-weight:bold;-webkit-text-stroke:0.3px">NetworkManager</span></p><p style="top:274px"> <span style="color:#00cdcd">1O6O </span><span style="color:#4d4d4d;font-weight:bold;-webkit-text-stroke:0.3px">root        </span><span style="color:#00cdcd">2O   </span><span style="color:#666666">O  </span><span style="color:#00ff00;font-weight:bold;-webkit-text-stroke:0.3px">281M 16</span><span style="color:#00cdcd">O56 </span><span style="color:#00ff00;font-weight:bold;-webkit-text-stroke:0.3px">13</span><span style="color:#00cdcd">O96 </span><span style="color:#666666">S  O.O  </span><span style="color:#00cdcd">O.1  O:OO.35       </span><span style="color:#00cd00">/usr/sbin/</span><span style="color:#0000ff;font-weight:bold;-webkit-text-stroke:0.3px">NetworkManager</span></p><p style="top:287px"> <span style="color:#00cdcd">1O63 </span><span style="color:#4d4d4d;font-weight:bold;-webkit-text-stroke:0.3px">root        </span><span style="color:#00cdcd">2O   </span><span style="color:#666666">O  </span><span style="color:#00ff00;font-weight:bold;-webkit-text-stroke:0.3px">281M 16</span><span style="color:#00cdcd">O56 </span><span style="color:#00ff00;font-weight:bold;-webkit-text-stroke:0.3px">13</span><span style="color:#00cdcd">O96 </span><span style="color:#666666">S  O.O  </span><span style="color:#00cdcd">O.1  O:OO.6O       </span><span style="color:#00cd00">/usr/sbin/</span><span style="color:#0000ff;font-weight:bold;-webkit-text-stroke:0.3px">NetworkManager</span></p><p style="top:300px"> <span style="color:#00cdcd">1175 </span><span style="color:#4d4d4d;font-weight:bold;-webkit-text-stroke:0.3px">dhcpcd      </span><span style="color:#00cdcd">2O   </span><span style="color:#666666">O  </span><span style="color:#00ff00;font-weight:bold;-webkit-text-stroke:0.3px">2</span><span style="color:#00cdcd">996  </span><span style="color:#00ff00;font-weight:bold;-webkit-text-stroke:0.3px">2</span><span style="color:#00cdcd">56O  </span><span style="color:#00ff00;font-weight:bold;-webkit-text-stroke:0.3px">2</span><span style="color:#00cdcd">2OO </span><span style="color:#666666">S  O.O  O.O  </span><span style="color:#00cdcd">O:OO.O3       </span><span style="color:#00ff00;font-weight:bold;-webkit-text-stroke:0.3px">dhcpcd: </span><span style="color:#00cdcd">wlan1 [ip4]</span></p><p style="top:313px"> <span style="color:#00cdcd">1178 </span><span style="color:#4d4d4d;font-weight:bold;-webkit-text-stroke:0.3px">root        </span><span style="color:#00cdcd">2O   </span><span style="color:#666666">O  </span><span style="color:#00ff00;font-weight:bold;-webkit-text-stroke:0.3px">3</span><span style="color:#00cdcd">OOO  </span><span style="color:#00ff00;font-weight:bold;-webkit-text-stroke:0.3px">2</span><span style="color:#00cdcd">O44  </span><span style="color:#00ff00;font-weight:bold;-webkit-text-stroke:0.3px">1</span><span style="color:#00cdcd">748 </span><span style="color:#666666">S  O.O  O.O  </span><span style="color:#00cdcd">O:OO.OO          </span><span style="color:#00ff00;font-weight:bold;-webkit-text-stroke:0.3px">dhcpcd: </span><span style="color:#00cdcd">[privileged proxy] wlan1 [ip4]</span></p><p style="top:326px"> <span style="color:#00cdcd">1187 </span><span style="color:#4d4d4d;font-weight:bold;-webkit-text-stroke:0.3px">dhcpcd      </span><span style="color:#00cdcd">2O   </span><span style="color:#666666">O  </span><span style="color:#00ff00;font-weight:bold;-webkit-text-stroke:0.3px">3</span><span style="color:#00cdcd">OOO   3O4     8 </span><span style="color:#666666">S  O.O  O.O  </span><span style="color:#00cdcd">O:OO.OO             </span><span style="color:#00ff00;font-weight:bold;-webkit-text-stroke:0.3px">dhcpcd: </span><span style="color:#00cdcd">[BPF ARP] wlan1 192.168.1.119</span></p><p style="top:339px"> <span style="color:#00cdcd">1193 </span><span style="color:#4d4d4d;font-weight:bold;-webkit-text-stroke:0.3px">dhcpcd      </span><span style="color:#00cdcd">2O   </span><span style="color:#666666">O  </span><span style="color:#00ff00;font-weight:bold;-webkit-text-stroke:0.3px">3</span><span style="color:#00cdcd">OOO   3O4     8 </span><span style="color:#666666">S  O.O  O.O  </span><span style="color:#00cdcd">O:OO.OO             </span><span style="color:#00ff00;font-weight:bold;-webkit-text-stroke:0.3px">dhcpcd: </span><span style="color:#00cdcd">[network proxy] 192.168.1.119</span></p><p style="top:352px"> <span style="color:#00cdcd">1179 </span><span style="color:#4d4d4d;font-weight:bold;-webkit-text-stroke:0.3px">dhcpcd      </span><span style="color:#00cdcd">2O   </span><span style="color:#666666">O  </span><span style="color:#00ff00;font-weight:bold;-webkit-text-stroke:0.3px">2</span><span style="color:#00cdcd">988   288     8 </span><span style="color:#666666">S  O.O  O.O  </span><span style="color:#00cdcd">O:OO.OO          </span><span style="color:#00ff00;font-weight:bold;-webkit-text-stroke:0.3px">dhcpcd: </span><span style="color:#00cdcd">[control proxy] wlan1 [ip4]</span></p><p style="top:365px"> <span style="color:#00cdcd">1O77 </span><span style="color:#4d4d4d;font-weight:bold;-webkit-text-stroke:0.3px">root        </span><span style="color:#00cdcd">2O   </span><span style="color:#666666">O  </span><span style="color:#00ff00;font-weight:bold;-webkit-text-stroke:0.3px">8</span><span style="color:#00cdcd">476  </span><span style="color:#00ff00;font-weight:bold;-webkit-text-stroke:0.3px">2</span><span style="color:#00cdcd">564  </span><span style="color:#00ff00;font-weight:bold;-webkit-text-stroke:0.3px">1</span><span style="color:#00cdcd">896 </span><span style="color:#666666">S  O.O  O.O  </span><span style="color:#00cdcd">O:OO.OO    </span><span style="color:#00ff00;font-weight:bold;-webkit-text-stroke:0.3px">sshd: </span><span style="color:#00cdcd">/usr/sbin/sshd [listener] O of 1O-1OO startups</span></p><p style="top:378px"> <span style="color:#00cdcd">1O91 </span><span style="color:#4d4d4d;font-weight:bold;-webkit-text-stroke:0.3px">root        </span><span style="color:#00cdcd">2O   </span><span style="color:#666666">O  </span><span style="color:#00ff00;font-weight:bold;-webkit-text-stroke:0.3px">2</span><span style="color:#00cdcd">484    92     O </span><span style="color:#666666">S  O.O  O.O  </span><span style="color:#00cdcd">O:O1.O8    /usr/sbin/</span><span style="color:#00ff00;font-weight:bold;-webkit-text-stroke:0.3px">acpid</span></p><p style="top:391px"> <span style="color:#00cdcd">1115 </span><span style="color:#4d4d4d;font-weight:bold;-webkit-text-stroke:0.3px">root        </span><span style="color:#00cdcd">2O   </span><span style="color:#666666">O  </span><span style="color:#00ff00;font-weight:bold;-webkit-text-stroke:0.3px">2</span><span style="color:#00cdcd">512  </span><span style="color:#00ff00;font-weight:bold;-webkit-text-stroke:0.3px">1</span><span style="color:#00cdcd">812  </span><span style="color:#00ff00;font-weight:bold;-webkit-text-stroke:0.3px">1</span><span style="color:#00cdcd">692 </span><span style="color:#666666">S  O.O  O.O  </span><span style="color:#00cdcd">O:OO.O4    /usr/sbin/</span><span style="color:#00ff00;font-weight:bold;-webkit-text-stroke:0.3px">crond </span><span style="color:#00cdcd">-l notice</span></p><p style="top:404px"> <span style="color:#00cdcd">1119 </span><span style="color:#4d4d4d;font-weight:bold;-webkit-text-stroke:0.3px">daemon      </span><span style="color:#00cdcd">2O   </span><span style="color:#666666">O  </span><span style="color:#00ff00;font-weight:bold;-webkit-text-stroke:0.3px">2</span><span style="color:#00cdcd">592   132     O </span><span style="color:#666666">S  O.O  O.O  </span><span style="color:#00cdcd">O:OO.OO    /usr/sbin/</span><span style="color:#00ff00;font-weight:bold;-webkit-text-stroke:0.3px">atd </span><span style="color:#00cdcd">-b 15 -l 1</span></p><p style="top:417px"> <span style="color:#00cdcd">1123 </span><span style="color:#4d4d4d;font-weight:bold;-webkit-text-stroke:0.3px">root        </span><span style="color:#00cdcd">2O   </span><span style="color:#666666">O  </span><span style="color:#00ff00;font-weight:bold;-webkit-text-stroke:0.3px">3</span><span style="color:#00cdcd">86O   1O4     O </span><span style="color:#666666">S  O.O  O.O  </span><span style="color:#00cdcd">O:OO.81    /usr/sbin/</span><span style="color:#00ff00;font-weight:bold;-webkit-text-stroke:0.3px">gpm </span><span style="color:#00cdcd">-m /dev/mouse -t imps2</span></p><p style="top:430px"> <span style="color:#00cdcd">1127 </span><span style="color:#4d4d4d;font-weight:bold;-webkit-text-stroke:0.3px">root        </span><span style="color:#00cdcd">2O   </span><span style="color:#666666">O  </span><span style="color:#00ff00;font-weight:bold;-webkit-text-stroke:0.3px">3</span><span style="color:#00cdcd">O16  </span><span style="color:#00ff00;font-weight:bold;-webkit-text-stroke:0.3px">1</span><span style="color:#00cdcd">752  </span><span style="color:#00ff00;font-weight:bold;-webkit-text-stroke:0.3px">1</span><span style="color:#00cdcd">632 </span><span style="color:#666666">S  O.O  O.O  </span><span style="color:#00cdcd">O:OO.OO    /sbin/</span><span style="color:#00ff00;font-weight:bold;-webkit-text-stroke:0.3px">agetty </span><span style="color:#00cdcd">--noclear 384OO tty1 linux</span></p><p style="top:443px"> <span style="color:#00cdcd">1128 </span><span style="color:#4d4d4d;font-weight:bold;-webkit-text-stroke:0.3px">root        </span><span style="color:#00cdcd">2O   </span><span style="color:#666666">O  </span><span style="color:#00ff00;font-weight:bold;-webkit-text-stroke:0.3px">3</span><span style="color:#00cdcd">O16  </span><span style="color:#00ff00;font-weight:bold;-webkit-text-stroke:0.3px">1</span><span style="color:#00cdcd">852  </span><span style="color:#00ff00;font-weight:bold;-webkit-text-stroke:0.3px">1</span><span style="color:#00cdcd">732 </span><span style="color:#666666">S  O.O  O.O  </span><span style="color:#00cdcd">O:OO.OO    /sbin/</span><span style="color:#00ff00;font-weight:bold;-webkit-text-stroke:0.3px">agetty </span><span style="color:#00cdcd">384OO tty2 linux</span></p><p style="top:456px"> <span style="color:#00cdcd">1129 </span><span style="color:#4d4d4d;font-weight:bold;-webkit-text-stroke:0.3px">root        </span><span style="color:#00cdcd">2O   </span><span style="color:#666666">O  </span><span style="color:#00ff00;font-weight:bold;-webkit-text-stroke:0.3px">3</span><span style="color:#00cdcd">O16  </span><span style="color:#00ff00;font-weight:bold;-webkit-text-stroke:0.3px">1</span><span style="color:#00cdcd">852  </span><span style="color:#00ff00;font-weight:bold;-webkit-text-stroke:0.3px">1</span><span style="color:#00cdcd">732 </span><span style="color:#666666">S  O.O  O.O  </span><span style="color:#00cdcd">O:OO.OO    /sbin/</span><span style="color:#00ff00;font-weight:bold;-webkit-text-stroke:0.3px">agetty </span><span style="color:#00cdcd">384OO tty3 linux</span></p><p style="top:469px"> <span style="color:#00cdcd">113O </span><span style="color:#4d4d4d;font-weight:bold;-webkit-text-stroke:0.3px">root        </span><span style="color:#00cdcd">2O   </span><span style="color:#666666">O  </span><span style="color:#00ff00;font-weight:bold;-webkit-text-stroke:0.3px">3</span><span style="color:#00cdcd">O16  </span><span style="color:#00ff00;font-weight:bold;-webkit-text-stroke:0.3px">1</span><span style="color:#00cdcd">844  </span><span style="color:#00ff00;font-weight:bold;-webkit-text-stroke:0.3px">1</span><span style="color:#00cdcd">724 </span><span style="color:#666666">S  O.O  O.O  </span><span style="color:#00cdcd">O:OO.OO    /sbin/</span><span style="color:#00ff00;font-weight:bold;-webkit-text-stroke:0.3px">agetty </span><span style="color:#00cdcd">384OO tty4 linux</span></p><p style="top:482px"> <span style="color:#00cdcd">1131 </span><span style="color:#4d4d4d;font-weight:bold;-webkit-text-stroke:0.3px">root        </span><span style="color:#00cdcd">2O   </span><span style="color:#666666">O  </span><span style="color:#00ff00;font-weight:bold;-webkit-text-stroke:0.3px">3</span><span style="color:#00cdcd">O16  </span><span style="color:#00ff00;font-weight:bold;-webkit-text-stroke:0.3px">1</span><span style="color:#00cdcd">84O  </span><span style="color:#00ff00;font-weight:bold;-webkit-text-stroke:0.3px">1</span><span style="color:#00cdcd">72O </span><span style="color:#666666">S  O.O  O.O  </span><span style="color:#00cdcd">O:OO.OO    /sbin/</span><span style="color:#00ff00;font-weight:bold;-webkit-text-stroke:0.3px">agetty </span><span style="color:#00cdcd">384OO tty5 linux</span></p><p style="top:495px"> <span style="color:#00cdcd">1132 </span><span style="color:#4d4d4d;font-weight:bold;-webkit-text-stroke:0.3px">root        </span><span style="color:#00cdcd">2O   </span><span style="color:#666666">O  </span><span style="color:#00ff00;font-weight:bold;-webkit-text-stroke:0.3px">3</span><span style="color:#00cdcd">O16  </span><span style="color:#00ff00;font-weight:bold;-webkit-text-stroke:0.3px">1</span><span style="color:#00cdcd">836  </span><span style="color:#00ff00;font-weight:bold;-webkit-text-stroke:0.3px">1</span><span style="color:#00cdcd">712 </span><span style="color:#666666">S  O.O  O.O  </span><span style="color:#00cdcd">O:OO.OO    /sbin/</span><span style="color:#00ff00;font-weight:bold;-webkit-text-stroke:0.3px">agetty </span><span style="color:#00cdcd">384OO tty6 linux</span></p><p style="top:508px"> <span style="color:#00cdcd">1133 </span><span style="color:#4d4d4d;font-weight:bold;-webkit-text-stroke:0.3px">root        </span><span style="color:#00cdcd">2O   </span><span style="color:#666666">O  </span><span style="color:#00ff00;font-weight:bold;-webkit-text-stroke:0.3px">5</span><span style="color:#00cdcd">336  </span><span style="color:#00ff00;font-weight:bold;-webkit-text-stroke:0.3px">3</span><span style="color:#00cdcd">372  </span><span style="color:#00ff00;font-weight:bold;-webkit-text-stroke:0.3px">3</span><span style="color:#00cdcd">O48 </span><span style="color:#666666">S  O.O  O.O  </span><span style="color:#00cdcd">O:OO.OO    /usr/bin/</span><span style="color:#00ff00;font-weight:bold;-webkit-text-stroke:0.3px">xdm </span><span style="color:#00cdcd">-nodaemon</span></p><p style="top:521px"> <span style="color:#00cdcd">114O </span><span style="color:#4d4d4d;font-weight:bold;-webkit-text-stroke:0.3px">root        </span><span style="color:#00cdcd">2O   </span><span style="color:#666666">O  </span><span style="color:#00ff00;font-weight:bold;-webkit-text-stroke:0.3px">325M 95</span><span style="color:#00cdcd">544 </span><span style="color:#00ff00;font-weight:bold;-webkit-text-stroke:0.3px">59</span><span style="color:#00cdcd">388 </span><span style="color:#666666">S  O.O  </span><span style="color:#00cdcd">O.4  6:39.O6       /usr/libexec/</span><span style="color:#00ff00;font-weight:bold;-webkit-text-stroke:0.3px">Xorg </span><span style="color:#00cdcd">:O -auth /var/lib/xdm/authdir/authfiles/A:O-a7myC9</span></p><p style="top:534px"> <span style="color:#00cdcd">1153 </span><span style="color:#4d4d4d;font-weight:bold;-webkit-text-stroke:0.3px">root        </span><span style="color:#00cdcd">39  </span><span style="color:#00cd00">19  </span><span style="color:#00ff00;font-weight:bold;-webkit-text-stroke:0.3px">325M 95</span><span style="color:#00cdcd">544 </span><span style="color:#00ff00;font-weight:bold;-webkit-text-stroke:0.3px">59</span><span style="color:#00cdcd">388 </span><span style="color:#666666">S  O.O  </span><span style="color:#00cdcd">O.4  O:OO.OO          </span><span style="color:#00cd00">/usr/libexec/</span><span style="color:#0000ff;font-weight:bold;-webkit-text-stroke:0.3px">Xorg </span><span style="color:#00cd00">:O -auth /var/lib/xdm/authdir/authfiles/A:O-a7myC9</span></p><p style="top:547px"> <span style="color:#00cdcd">1156 </span><span style="color:#4d4d4d;font-weight:bold;-webkit-text-stroke:0.3px">root        </span><span style="color:#00cdcd">2O   </span><span style="color:#666666">O  </span><span style="color:#00ff00;font-weight:bold;-webkit-text-stroke:0.3px">325M 95</span><span style="color:#00cdcd">544 </span><span style="color:#00ff00;font-weight:bold;-webkit-text-stroke:0.3px">59</span><span style="color:#00cdcd">388 </span><span style="color:#666666">S  </span><span style="color:#00cdcd">1.3  O.4  O:21.6O          </span><span style="color:#00cd00">/usr/libexec/</span><span style="color:#0000ff;font-weight:bold;-webkit-text-stroke:0.3px">Xorg </span><span style="color:#00cd00">:O -auth /var/lib/xdm/authdir/authfiles/A:O-a7myC9</span></p><p style="top:560px"> <span style="color:#00cdcd">1157 </span><span style="color:#4d4d4d;font-weight:bold;-webkit-text-stroke:0.3px">root        </span><span style="color:#00cdcd">2O   </span><span style="color:#666666">O </span><span style="color:#00ff00;font-weight:bold;-webkit-text-stroke:0.3px">13</span><span style="color:#00cdcd">6OO  </span><span style="color:#00ff00;font-weight:bold;-webkit-text-stroke:0.3px">9</span><span style="color:#00cdcd">26O  </span><span style="color:#00ff00;font-weight:bold;-webkit-text-stroke:0.3px">7</span><span style="color:#00cdcd">612 </span><span style="color:#666666">S  O.O  O.O  </span><span style="color:#00cdcd">O:OO.O4       </span><span style="color:#00ff00;font-weight:bold;-webkit-text-stroke:0.3px">-</span><span style="color:#00cdcd">:O</span></p><p style="top:573px"> <span style="color:#00cdcd">12O3 logout      2O   </span><span style="color:#666666">O  </span><span style="color:#00ff00;font-weight:bold;-webkit-text-stroke:0.3px">7</span><span style="color:#00cdcd">O12  </span><span style="color:#00ff00;font-weight:bold;-webkit-text-stroke:0.3px">3</span><span style="color:#00cdcd">34O  </span><span style="color:#00ff00;font-weight:bold;-webkit-text-stroke:0.3px">2</span><span style="color:#00cdcd">812 </span><span style="color:#666666">S  O.O  O.O  </span><span style="color:#00cdcd">O:OO.O1          /bin/</span><span style="color:#00ff00;font-weight:bold;-webkit-text-stroke:0.3px">sh </span><span style="color:#00cdcd">/home/logout/.xsession</span></p><p style="top:586px"> <span style="color:#00cdcd">123O logout      25   </span><span style="color:#00cd00">5 </span><span style="color:#00ff00;font-weight:bold;-webkit-text-stroke:0.3px">34</span><span style="color:#00cdcd">488 </span><span style="color:#00ff00;font-weight:bold;-webkit-text-stroke:0.3px">13</span><span style="color:#00cdcd">3OO </span><span style="color:#00ff00;font-weight:bold;-webkit-text-stroke:0.3px">11</span><span style="color:#00cdcd">184 </span><span style="color:#666666">S  O.O  </span><span style="color:#00cdcd">O.1  O:OO.O9             </span><span style="color:#00ff00;font-weight:bold;-webkit-text-stroke:0.3px">icewmbg</span></p><p style="top:599px"> <span style="color:#00cdcd">1232 logout      2O   </span><span style="color:#666666">O  </span><span style="color:#00ff00;font-weight:bold;-webkit-text-stroke:0.3px">7</span><span style="color:#00cdcd">74O  </span><span style="color:#00ff00;font-weight:bold;-webkit-text-stroke:0.3px">2</span><span style="color:#00cdcd">O68  </span><span style="color:#00ff00;font-weight:bold;-webkit-text-stroke:0.3px">1</span><span style="color:#00cdcd">828 </span><span style="color:#666666">S  O.O  O.O  </span><span style="color:#00cdcd">O:OO.OO             </span><span style="color:#00ff00;font-weight:bold;-webkit-text-stroke:0.3px">icewm-session</span></p><p style="top:612px"> <span style="color:#00cdcd">1238 logout      2O   </span><span style="color:#666666">O </span><span style="color:#00ff00;font-weight:bold;-webkit-text-stroke:0.3px">44</span><span style="color:#00cdcd">8O4 </span><span style="color:#00ff00;font-weight:bold;-webkit-text-stroke:0.3px">29</span><span style="color:#00cdcd">192 </span><span style="color:#00ff00;font-weight:bold;-webkit-text-stroke:0.3px">22</span><span style="color:#00cdcd">828 </span><span style="color:#666666">S  </span><span style="color:#00cdcd">O.6  O.1  O:23.7O                </span><span style="color:#00ff00;font-weight:bold;-webkit-text-stroke:0.3px">icewm </span><span style="color:#00cdcd">--notify</span></p><p style="top:625px"> <span style="color:#00cdcd">1243 logout      2O   </span><span style="color:#666666">O  </span><span style="color:#00ff00;font-weight:bold;-webkit-text-stroke:0.3px">7</span><span style="color:#00cdcd">6O4  </span><span style="color:#00ff00;font-weight:bold;-webkit-text-stroke:0.3px">3</span><span style="color:#00cdcd">992  </span><span style="color:#00ff00;font-weight:bold;-webkit-text-stroke:0.3px">2</span><span style="color:#00cdcd">868 </span><span style="color:#666666">S  O.O  O.O  </span><span style="color:#00cdcd">O:OO.O1                   /bin/</span><span style="color:#00ff00;font-weight:bold;-webkit-text-stroke:0.3px">sh </span><span style="color:#00cdcd">/usr/bin/xdg-open about:blank</span></p><p style="top:638px"> <span style="color:#00cdcd">1322 logout      2O   </span><span style="color:#666666">O </span><span style="color:#ffff00;font-weight:bold;-webkit-text-stroke:0.3px">4</span><span style="color:#00ff00;font-weight:bold;-webkit-text-stroke:0.3px">O81M  61OM  226M </span><span style="color:#666666">S  O.O  </span><span style="color:#00cdcd">2.5 16:2O.86                      /usr/lib64/firefox/</span><span style="color:#00ff00;font-weight:bold;-webkit-text-stroke:0.3px">firefox </span><span style="color:#00cdcd">about:blank</span></p><p style="top:651px"> <span style="color:#00cdcd">1325 logout      39  </span><span style="color:#00cd00">19 </span><span style="color:#ffff00;font-weight:bold;-webkit-text-stroke:0.3px">4</span><span style="color:#00ff00;font-weight:bold;-webkit-text-stroke:0.3px">O81M  61OM  226M </span><span style="color:#666666">S  O.O  </span><span style="color:#00cdcd">2.5  O:OO.OO                         </span><span style="color:#00cd00">/usr/lib64/firefox/</span><span style="color:#0000ff;font-weight:bold;-webkit-text-stroke:0.3px">firefox </span><span style="color:#00cd00">about:blank</span></p><p style="top:664px"> <span style="color:#00cdcd">1326 logout      2O   </span><span style="color:#666666">O </span><span style="color:#ffff00;font-weight:bold;-webkit-text-stroke:0.3px">4</span><span style="color:#00ff00;font-weight:bold;-webkit-text-stroke:0.3px">O81M  61OM  226M </span><span style="color:#666666">S  O.O  </span><span style="color:#00cdcd">2.5  O:23.O3                         </span><span style="color:#00cd00">/usr/lib64/firefox/</span><span style="color:#0000ff;font-weight:bold;-webkit-text-stroke:0.3px">firefox </span><span style="color:#00cd00">about:blank</span></p><p style="top:677px"> <span style="color:#00cdcd">1328 logout      2O   </span><span style="color:#666666">O </span><span style="color:#ffff00;font-weight:bold;-webkit-text-stroke:0.3px">4</span><span style="color:#00ff00;font-weight:bold;-webkit-text-stroke:0.3px">O81M  61OM  226M </span><span style="color:#666666">S  O.O  </span><span style="color:#00cdcd">2.5  O:2O.37                         </span><span style="color:#00cd00">/usr/lib64/firefox/</span><span style="color:#0000ff;font-weight:bold;-webkit-text-stroke:0.3px">firefox </span><span style="color:#00cd00">about:blank</span></p><p style="top:690px"> <span style="color:#00cdcd">1329 logout      2O   </span><span style="color:#666666">O </span><span style="color:#ffff00;font-weight:bold;-webkit-text-stroke:0.3px">4</span><span style="color:#00ff00;font-weight:bold;-webkit-text-stroke:0.3px">O81M  61OM  226M </span><span style="color:#666666">S  O.O  </span><span style="color:#00cdcd">2.5  O:O2.88                         </span><span style="color:#00cd00">/usr/lib64/firefox/</span><span style="color:#0000ff;font-weight:bold;-webkit-text-stroke:0.3px">firefox </span><span style="color:#00cd00">about:blank</span></p><p style="top:703px"> <span style="color:#00cdcd">133O logout      2O   </span><span style="color:#666666">O </span><span style="color:#ffff00;font-weight:bold;-webkit-text-stroke:0.3px">4</span><span style="color:#00ff00;font-weight:bold;-webkit-text-stroke:0.3px">O81M  61OM  226M </span><span style="color:#666666">S  O.O  </span><span style="color:#00cdcd">2.5  O:OO.O2                         </span><span style="color:#00cd00">/usr/lib64/firefox/</span><span style="color:#0000ff;font-weight:bold;-webkit-text-stroke:0.3px">firefox </span><span style="color:#00cd00">about:blank</span></p><p style="top:716px"> <span style="color:#00cdcd">1331 logout      2O   </span><span style="color:#666666">O </span><span style="color:#ffff00;font-weight:bold;-webkit-text-stroke:0.3px">4</span><span style="color:#00ff00;font-weight:bold;-webkit-text-stroke:0.3px">O81M  61OM  226M </span><span style="color:#666666">S  O.O  </span><span style="color:#00cdcd">2.5  O:5O.8O                         </span><span style="color:#00cd00">/usr/lib64/firefox/</span><span style="color:#0000ff;font-weight:bold;-webkit-text-stroke:0.3px">firefox </span><span style="color:#00cd00">about:blank</span></p><p style="top:729px"> <span style="color:#00cdcd">1332 logout      2O   </span><span style="color:#666666">O </span><span style="color:#ffff00;font-weight:bold;-webkit-text-stroke:0.3px">4</span><span style="color:#00ff00;font-weight:bold;-webkit-text-stroke:0.3px">O81M  61OM  226M </span><span style="color:#666666">S  O.O  </span><span style="color:#00cdcd">2.5  1:O3.61                         </span><span style="color:#00cd00">/usr/lib64/firefox/</span><span style="color:#0000ff;font-weight:bold;-webkit-text-stroke:0.3px">firefox </span><span style="color:#00cd00">about:blank</span></p><p style="top:742px"> <span style="color:#00cdcd">1334 logout      2O   </span><span style="color:#666666">O </span><span style="color:#ffff00;font-weight:bold;-webkit-text-stroke:0.3px">4</span><span style="color:#00ff00;font-weight:bold;-webkit-text-stroke:0.3px">O81M  61OM  226M </span><span style="color:#666666">S  O.O  </span><span style="color:#00cdcd">2.5  O:OO.OO                         </span><span style="color:#00cd00">/usr/lib64/firefox/</span><span style="color:#0000ff;font-weight:bold;-webkit-text-stroke:0.3px">firefox </span><span style="color:#00cd00">about:blank</span></p><p style="top:755px"> <span style="color:#00cdcd">1337 logout      2O   </span><span style="color:#666666">O </span><span style="color:#ffff00;font-weight:bold;-webkit-text-stroke:0.3px">4</span><span style="color:#00ff00;font-weight:bold;-webkit-text-stroke:0.3px">O81M  61OM  226M </span><span style="color:#666666">S  O.O  </span><span style="color:#00cdcd">2.5  O:OO.32                         </span><span style="color:#00cd00">/usr/lib64/firefox/</span><span style="color:#0000ff;font-weight:bold;-webkit-text-stroke:0.3px">firefox </span><span style="color:#00cd00">about:blank</span></p><p style="top:768px"> <span style="color:#00cdcd">1339 logout      2O   </span><span style="color:#666666">O </span><span style="color:#ffff00;font-weight:bold;-webkit-text-stroke:0.3px">4</span><span style="color:#00ff00;font-weight:bold;-webkit-text-stroke:0.3px">O81M  61OM  226M </span><span style="color:#666666">S  O.O  </span><span style="color:#00cdcd">2.5  O:OO.4O                         </span><span style="color:#00cd00">/usr/lib64/firefox/</span><span style="color:#0000ff;font-weight:bold;-webkit-text-stroke:0.3px">firefox </span><span style="color:#00cd00">about:blank</span></p><p style="top:781px"> <span style="color:#00cdcd">134O logout      2O   </span><span style="color:#666666">O </span><span style="color:#ffff00;font-weight:bold;-webkit-text-stroke:0.3px">4</span><span style="color:#00ff00;font-weight:bold;-webkit-text-stroke:0.3px">O81M  61OM  226M </span><span style="color:#666666">S  O.O  </span><span style="color:#00cdcd">2.5  O:OO.41                         </span><span style="color:#00cd00">/usr/lib64/firefox/</span><span style="color:#0000ff;font-weight:bold;-webkit-text-stroke:0.3px">firefox </span><span style="color:#00cd00">about:blank</span></p><p style="top:794px"> <span style="color:#00cdcd">1341 logout      2O   </span><span style="color:#666666">O </span><span style="color:#ffff00;font-weight:bold;-webkit-text-stroke:0.3px">4</span><span style="color:#00ff00;font-weight:bold;-webkit-text-stroke:0.3px">O81M  61OM  226M </span><span style="color:#666666">S  O.O  </span><span style="color:#00cdcd">2.5  O:OO.37                         </span><span style="color:#00cd00">/usr/lib64/firefox/</span><span style="color:#0000ff;font-weight:bold;-webkit-text-stroke:0.3px">firefox </span><span style="color:#00cd00">about:blank</span></p><p style="top:807px"> <span style="color:#00cdcd">1342 logout      2O   </span><span style="color:#666666">O </span><span style="color:#ffff00;font-weight:bold;-webkit-text-stroke:0.3px">4</span><span style="color:#00ff00;font-weight:bold;-webkit-text-stroke:0.3px">O81M  61OM  226M </span><span style="color:#666666">S  O.O  </span><span style="color:#00cdcd">2.5  O:OO.54                         </span><span style="color:#00cd00">/usr/lib64/firefox/</span><span style="color:#0000ff;font-weight:bold;-webkit-text-stroke:0.3px">firefox </span><span style="color:#00cd00">about:blank</span></p><p style="top:820px"> <span style="color:#00cdcd">1343 logout      2O   </span><span style="color:#666666">O </span><span style="color:#ffff00;font-weight:bold;-webkit-text-stroke:0.3px">4</span><span style="color:#00ff00;font-weight:bold;-webkit-text-stroke:0.3px">O81M  61OM  226M </span><span style="color:#666666">S  O.O  </span><span style="color:#00cdcd">2.5  O:OO.4O                         </span><span style="color:#00cd00">/usr/lib64/firefox/</span><span style="color:#0000ff;font-weight:bold;-webkit-text-stroke:0.3px">firefox </span><span style="color:#00cd00">about:blank</span></p><p style="top:833px"> <span style="color:#00cdcd">1344 logout      2O   </span><span style="color:#666666">O </span><span style="color:#ffff00;font-weight:bold;-webkit-text-stroke:0.3px">4</span><span style="color:#00ff00;font-weight:bold;-webkit-text-stroke:0.3px">O81M  61OM  226M </span><span style="color:#666666">S  O.O  </span><span style="color:#00cdcd">2.5  O:OO.44                         </span><span style="color:#00cd00">/usr/lib64/firefox/</span><span style="color:#0000ff;font-weight:bold;-webkit-text-stroke:0.3px">firefox </span><span style="color:#00cd00">about:blank</span></p><p style="top:846px"> <span style="color:#00cdcd">1345 logout      2O   </span><span style="color:#666666">O </span><span style="color:#ffff00;font-weight:bold;-webkit-text-stroke:0.3px">4</span><span style="color:#00ff00;font-weight:bold;-webkit-text-stroke:0.3px">O81M  61OM  226M </span><span style="color:#666666">S  O.O  </span><span style="color:#00cdcd">2.5  O:OO.47                         </span><span style="color:#00cd00">/usr/lib64/firefox/</span><span style="color:#0000ff;font-weight:bold;-webkit-text-stroke:0.3px">firefox </span><span style="color:#00cd00">about:blank</span></p><p style="top:859px"> <span style="color:#00cdcd">1346 logout      2O   </span><span style="color:#666666">O </span><span style="color:#ffff00;font-weight:bold;-webkit-text-stroke:0.3px">4</span><span style="color:#00ff00;font-weight:bold;-webkit-text-stroke:0.3px">O81M  61OM  226M </span><span style="color:#666666">S  O.O  </span><span style="color:#00cdcd">2.5  O:OO.45                         </span><span style="color:#00cd00">/usr/lib64/firefox/</span><span style="color:#0000ff;font-weight:bold;-webkit-text-stroke:0.3px">firefox </span><span style="color:#00cd00">about:blank</span></p><p style="top:872px"> <span style="color:#00cdcd">1347 logout      2O   </span><span style="color:#666666">O </span><span style="color:#ffff00;font-weight:bold;-webkit-text-stroke:0.3px">4</span><span style="color:#00ff00;font-weight:bold;-webkit-text-stroke:0.3px">O81M  61OM  226M </span><span style="color:#666666">S  O.O  </span><span style="color:#00cdcd">2.5  O:16.11                         </span><span style="color:#00cd00">/usr/lib64/firefox/</span><span style="color:#0000ff;font-weight:bold;-webkit-text-stroke:0.3px">firefox </span><span style="color:#00cd00">about:blank</span></p><p style="top:885px"> <span style="color:#00cdcd">1348 logout      2O   </span><span style="color:#666666">O </span><span style="color:#ffff00;font-weight:bold;-webkit-text-stroke:0.3px">4</span><span style="color:#00ff00;font-weight:bold;-webkit-text-stroke:0.3px">O81M  61OM  226M </span><span style="color:#666666">S  O.O  </span><span style="color:#00cdcd">2.5  O:OO.OO                         </span><span style="color:#00cd00">/usr/lib64/firefox/</span><span style="color:#0000ff;font-weight:bold;-webkit-text-stroke:0.3px">firefox </span><span style="color:#00cd00">about:blank</span></p><p style="top:898px"> <span style="color:#00cdcd">1353 logout      2O   </span><span style="color:#666666">O </span><span style="color:#ffff00;font-weight:bold;-webkit-text-stroke:0.3px">4</span><span style="color:#00ff00;font-weight:bold;-webkit-text-stroke:0.3px">O81M  61OM  226M </span><span style="color:#666666">S  O.O  </span><span style="color:#00cdcd">2.5  O:OO.OO                         </span><span style="color:#00cd00">/usr/lib64/firefox/</span><span style="color:#0000ff;font-weight:bold;-webkit-text-stroke:0.3px">firefox </span><span style="color:#00cd00">about:blank</span></p><p style="top:911px"> <span style="color:#00cdcd">1354 logout      2O   </span><span style="color:#666666">O </span><span style="color:#ffff00;font-weight:bold;-webkit-text-stroke:0.3px">4</span><span style="color:#00ff00;font-weight:bold;-webkit-text-stroke:0.3px">O81M  61OM  226M </span><span style="color:#666666">S  O.O  </span><span style="color:#00cdcd">2.5  O:OO.OO                         </span><span style="color:#00cd00">/usr/lib64/firefox/</span><span style="color:#0000ff;font-weight:bold;-webkit-text-stroke:0.3px">firefox </span><span style="color:#00cd00">about:blank</span></p><p style="top:924px"> <span style="color:#00cdcd">1355 logout      2O   </span><span style="color:#666666">O </span><span style="color:#ffff00;font-weight:bold;-webkit-text-stroke:0.3px">4</span><span style="color:#00ff00;font-weight:bold;-webkit-text-stroke:0.3px">O81M  61OM  226M </span><span style="color:#666666">S  O.O  </span><span style="color:#00cdcd">2.5  O:OO.O2                         </span><span style="color:#00cd00">/usr/lib64/firefox/</span><span style="color:#0000ff;font-weight:bold;-webkit-text-stroke:0.3px">firefox </span><span style="color:#00cd00">about:blank</span></p><p style="top:937px"><span style="color:#00cdcd">F1</span><span style="color:#000000">Help  </span><span style="color:#00cdcd">F2</span><span style="color:#000000">Setup </span><span style="color:#00cdcd">F3</span><span style="color:#000000">Search</span><span style="color:#00cdcd">F4</span><span style="color:#000000">Filter</span><span style="color:#00cdcd">F5</span><span style="color:#000000">List  </span><span style="color:#00cdcd">F6</span><span style="color:#000000">SortBy</span><span style="color:#00cdcd">F7</span><span style="color:#000000">Nice -</span><span style="color:#00cdcd">F8</span><span style="color:#000000">Nice +</span><span style="color:#00cdcd">F9</span><span style="color:#000000">Kill  </span><span style="color:#00cdcd">F1O</span><span style="color:#000000">Quit</span></p></div><div style="left:416px;top:259px;width:1px;height:13px;background:#00cdcd;"></div><div style="left:416px;top:265px;width:10px;height:1px;background:#00cdcd;"></div><div style="left:416px;top:272px;width:1px;height:13px;background:#00cdcd;"></div><div style="left:416px;top:278px;width:10px;height:1px;background:#00cdcd;"></div><div style="left:416px;top:285px;width:1px;height:13px;background:#00cdcd;"></div><div style="left:416px;top:291px;width:10px;height:1px;background:#00cdcd;"></div><div style="left:416px;top:298px;width:1px;height:13px;background:#00cdcd;"></div><div style="left:416px;top:304px;width:10px;height:1px;background:#00cdcd;"></div><div style="left:416px;top:311px;width:1px;height:13px;background:#00cdcd;"></div><div style="left:416px;top:317px;width:10px;height:1px;background:#00cdcd;"></div><div style="left:416px;top:324px;width:1px;height:13px;background:#00cdcd;"></div><div style="left:416px;top:330px;width:10px;height:1px;background:#00cdcd;"></div><div style="left:416px;top:337px;width:1px;height:13px;background:#00cdcd;"></div><div style="left:416px;top:343px;width:10px;height:1px;background:#00cdcd;"></div><div style="left:416px;top:350px;width:1px;height:13px;background:#00cdcd;"></div><div style="left:434px;top:350px;width:1px;height:13px;background:#00cdcd;"></div><div style="left:434px;top:356px;width:10px;height:1px;background:#00cdcd;"></div><div style="left:416px;top:363px;width:1px;height:13px;background:#00cdcd;"></div><div style="left:434px;top:363px;width:1px;height:13px;background:#00cdcd;"></div><div style="left:434px;top:369px;width:10px;height:1px;background:#00cdcd;"></div><div style="left:416px;top:376px;width:1px;height:13px;background:#00cdcd;"></div><div style="left:434px;top:376px;width:1px;height:7px;background:#00cdcd;"></div><div style="left:434px;top:382px;width:10px;height:1px;background:#00cdcd;"></div><div style="left:416px;top:389px;width:1px;height:13px;background:#00cdcd;"></div><div style="left:452px;top:389px;width:1px;height:13px;background:#00cdcd;"></div><div style="left:452px;top:395px;width:10px;height:1px;background:#00cdcd;"></div><div style="left:416px;top:402px;width:1px;height:13px;background:#00cdcd;"></div><div style="left:452px;top:402px;width:1px;height:13px;background:#00cdcd;"></div><div style="left:470px;top:402px;width:1px;height:13px;background:#00cdcd;"></div><div style="left:470px;top:408px;width:10px;height:1px;background:#00cdcd;"></div><div style="left:416px;top:415px;width:1px;height:13px;background:#00cdcd;"></div><div style="left:452px;top:415px;width:1px;height:13px;background:#00cdcd;"></div><div style="left:470px;top:415px;width:1px;height:7px;background:#00cdcd;"></div><div style="left:470px;top:421px;width:10px;height:1px;background:#00cdcd;"></div><div style="left:416px;top:428px;width:1px;height:13px;background:#00cdcd;"></div><div style="left:452px;top:428px;width:1px;height:7px;background:#00cdcd;"></div><div style="left:452px;top:434px;width:10px;height:1px;background:#00cdcd;"></div><div style="left:416px;top:441px;width:1px;height:13px;background:#00cdcd;"></div><div style="left:416px;top:447px;width:10px;height:1px;background:#00cdcd;"></div><div style="left:416px;top:454px;width:1px;height:13px;background:#00cdcd;"></div><div style="left:416px;top:460px;width:10px;height:1px;background:#00cdcd;"></div><div style="left:416px;top:467px;width:1px;height:13px;background:#00cdcd;"></div><div style="left:416px;top:473px;width:10px;height:1px;background:#00cdcd;"></div><div style="left:416px;top:480px;width:1px;height:13px;background:#00cdcd;"></div><div style="left:416px;top:486px;width:10px;height:1px;background:#00cdcd;"></div><div style="left:416px;top:493px;width:1px;height:13px;background:#00cdcd;"></div><div style="left:416px;top:499px;width:10px;height:1px;background:#00cdcd;"></div><div style="left:416px;top:506px;width:1px;height:13px;background:#00cdcd;"></div><div style="left:416px;top:512px;width:10px;height:1px;background:#00cdcd;"></div><div style="left:416px;top:519px;width:1px;height:13px;background:#00cdcd;"></div><div style="left:416px;top:525px;width:10px;height:1px;background:#00cdcd;"></div><div style="left:416px;top:532px;width:1px;height:13px;background:#00cdcd;"></div><div style="left:416px;top:538px;width:10px;height:1px;background:#00cdcd;"></div><div style="left:416px;top:545px;width:1px;height:13px;background:#00cdcd;"></div><div style="left:416px;top:551px;width:10px;height:1px;background:#00cdcd;"></div><div style="left:416px;top:558px;width:1px;height:13px;background:#00cdcd;"></div><div style="left:416px;top:564px;width:10px;height:1px;background:#00cdcd;"></div><div style="left:416px;top:571px;width:1px;height:13px;background:#00cdcd;"></div><div style="left:416px;top:577px;width:10px;height:1px;background:#00cdcd;"></div><div style="left:416px;top:584px;width:1px;height:13px;background:#00cdcd;"></div><div style="left:416px;top:590px;width:10px;height:1px;background:#00cdcd;"></div><div style="left:416px;top:597px;width:1px;height:13px;background:#00cdcd;"></div><div style="left:434px;top:597px;width:1px;height:13px;background:#00cdcd;"></div><div style="left:434px;top:603px;width:10px;height:1px;background:#00cdcd;"></div><div style="left:416px;top:610px;width:1px;height:13px;background:#00cdcd;"></div><div style="left:434px;top:610px;width:1px;height:13px;background:#00cdcd;"></div><div style="left:452px;top:610px;width:1px;height:13px;background:#00cdcd;"></div><div style="left:452px;top:616px;width:10px;height:1px;background:#00cdcd;"></div><div style="left:416px;top:623px;width:1px;height:13px;background:#00cdcd;"></div><div style="left:434px;top:623px;width:1px;height:13px;background:#00cdcd;"></div><div style="left:452px;top:623px;width:1px;height:7px;background:#00cdcd;"></div><div style="left:452px;top:629px;width:10px;height:1px;background:#00cdcd;"></div><div style="left:416px;top:636px;width:1px;height:13px;background:#00cdcd;"></div><div style="left:434px;top:636px;width:1px;height:7px;background:#00cdcd;"></div><div style="left:434px;top:642px;width:10px;height:1px;background:#00cdcd;"></div><div style="left:416px;top:649px;width:1px;height:13px;background:#00cdcd;"></div><div style="left:452px;top:649px;width:1px;height:7px;background:#00cdcd;"></div><div style="left:452px;top:655px;width:10px;height:1px;background:#00cdcd;"></div><div style="left:416px;top:662px;width:1px;height:13px;background:#00cdcd;"></div><div style="left:470px;top:662px;width:1px;height:13px;background:#00cdcd;"></div><div style="left:470px;top:668px;width:10px;height:1px;background:#00cdcd;"></div><div style="left:416px;top:675px;width:1px;height:13px;background:#00cdcd;"></div><div style="left:470px;top:675px;width:1px;height:7px;background:#00cdcd;"></div><div style="left:470px;top:681px;width:10px;height:1px;background:#00cdcd;"></div><div style="left:416px;top:688px;width:1px;height:13px;background:#00cdcd;"></div><div style="left:488px;top:688px;width:1px;height:7px;background:#00cdcd;"></div><div style="left:488px;top:694px;width:10px;height:1px;background:#00cdcd;"></div><div style="left:416px;top:701px;width:1px;height:13px;background:#00cdcd;"></div><div style="left:506px;top:701px;width:1px;height:13px;background:#00cdcd;"></div><div style="left:506px;top:707px;width:10px;height:1px;background:#00cdcd;"></div><div style="left:416px;top:714px;width:1px;height:13px;background:#00cdcd;"></div><div style="left:506px;top:714px;width:1px;height:13px;background:#00cdcd;"></div><div style="left:524px;top:714px;width:1px;height:7px;background:#00cdcd;"></div><div style="left:524px;top:720px;width:10px;height:1px;background:#00cdcd;"></div><div style="left:416px;top:727px;width:1px;height:13px;background:#00cdcd;"></div><div style="left:506px;top:727px;width:1px;height:13px;background:#00cdcd;"></div><div style="left:542px;top:727px;width:1px;height:13px;background:#00cdcd;"></div><div style="left:542px;top:733px;width:10px;height:1px;background:#00cdcd;"></div><div style="left:416px;top:740px;width:1px;height:13px;background:#00cdcd;"></div><div style="left:506px;top:740px;width:1px;height:13px;background:#00cdcd;"></div><div style="left:542px;top:740px;width:1px;height:13px;background:#00cdcd;"></div><div style="left:542px;top:746px;width:10px;height:1px;background:#00cdcd;"></div><div style="left:416px;top:753px;width:1px;height:13px;background:#00cdcd;"></div><div style="left:506px;top:753px;width:1px;height:13px;background:#00cdcd;"></div><div style="left:542px;top:753px;width:1px;height:13px;background:#00cdcd;"></div><div style="left:542px;top:759px;width:10px;height:1px;background:#00cdcd;"></div><div style="left:416px;top:766px;width:1px;height:13px;background:#00cdcd;"></div><div style="left:506px;top:766px;width:1px;height:13px;background:#00cdcd;"></div><div style="left:542px;top:766px;width:1px;height:13px;background:#00cdcd;"></div><div style="left:542px;top:772px;width:10px;height:1px;background:#00cdcd;"></div><div style="left:416px;top:779px;width:1px;height:13px;background:#00cdcd;"></div><div style="left:506px;top:779px;width:1px;height:13px;background:#00cdcd;"></div><div style="left:542px;top:779px;width:1px;height:13px;background:#00cdcd;"></div><div style="left:542px;top:785px;width:10px;height:1px;background:#00cdcd;"></div><div style="left:416px;top:792px;width:1px;height:13px;background:#00cdcd;"></div><div style="left:506px;top:792px;width:1px;height:13px;background:#00cdcd;"></div><div style="left:542px;top:792px;width:1px;height:13px;background:#00cdcd;"></div><div style="left:542px;top:798px;width:10px;height:1px;background:#00cdcd;"></div><div style="left:416px;top:805px;width:1px;height:13px;background:#00cdcd;"></div><div style="left:506px;top:805px;width:1px;height:13px;background:#00cdcd;"></div><div style="left:542px;top:805px;width:1px;height:13px;background:#00cdcd;"></div><div style="left:542px;top:811px;width:10px;height:1px;background:#00cdcd;"></div><div style="left:416px;top:818px;width:1px;height:13px;background:#00cdcd;"></div><div style="left:506px;top:818px;width:1px;height:13px;background:#00cdcd;"></div><div style="left:542px;top:818px;width:1px;height:13px;background:#00cdcd;"></div><div style="left:542px;top:824px;width:10px;height:1px;background:#00cdcd;"></div><div style="left:416px;top:831px;width:1px;height:13px;background:#00cdcd;"></div><div style="left:506px;top:831px;width:1px;height:13px;background:#00cdcd;"></div><div style="left:542px;top:831px;width:1px;height:13px;background:#00cdcd;"></div><div style="left:542px;top:837px;width:10px;height:1px;background:#00cdcd;"></div><div style="left:416px;top:844px;width:1px;height:13px;background:#00cdcd;"></div><div style="left:506px;top:844px;width:1px;height:13px;background:#00cdcd;"></div><div style="left:542px;top:844px;width:1px;height:13px;background:#00cdcd;"></div><div style="left:542px;top:850px;width:10px;height:1px;background:#00cdcd;"></div><div style="left:416px;top:857px;width:1px;height:13px;background:#00cdcd;"></div><div style="left:506px;top:857px;width:1px;height:13px;background:#00cdcd;"></div><div style="left:542px;top:857px;width:1px;height:13px;background:#00cdcd;"></div><div style="left:542px;top:863px;width:10px;height:1px;background:#00cdcd;"></div><div style="left:416px;top:870px;width:1px;height:13px;background:#00cdcd;"></div><div style="left:506px;top:870px;width:1px;height:13px;background:#00cdcd;"></div><div style="left:542px;top:870px;width:1px;height:13px;background:#00cdcd;"></div><div style="left:542px;top:876px;width:10px;height:1px;background:#00cdcd;"></div><div style="left:416px;top:883px;width:1px;height:13px;background:#00cdcd;"></div><div style="left:506px;top:883px;width:1px;height:13px;background:#00cdcd;"></div><div style="left:542px;top:883px;width:1px;height:13px;background:#00cdcd;"></div><div style="left:542px;top:889px;width:10px;height:1px;background:#00cdcd;"></div><div style="left:416px;top:896px;width:1px;height:13px;background:#00cdcd;"></div><div style="left:506px;top:896px;width:1px;height:13px;background:#00cdcd;"></div><div style="left:542px;top:896px;width:1px;height:13px;background:#00cdcd;"></div><div style="left:542px;top:902px;width:10px;height:1px;background:#00cdcd;"></div><div style="left:416px;top:909px;width:1px;height:13px;background:#00cdcd;"></div><div style="left:506px;top:909px;width:1px;height:13px;background:#00cdcd;"></div><div style="left:542px;top:909px;width:1px;height:13px;background:#00cdcd;"></div><div style="left:542px;top:915px;width:10px;height:1px;background:#00cdcd;"></div><div style="left:416px;top:922px;width:1px;height:13px;background:#00cdcd;"></div><div style="left:506px;top:922px;width:1px;height:13px;background:#00cdcd;"></div><div style="left:542px;top:922px;width:1px;height:13px;background:#00cdcd;"></div><div style="left:542px;top:928px;width:10px;height:1px;background:#00cdcd;"></div><div style="left:416px;top:935px;width:1px;height:13px;background:#00cdcd;"></div><div style="left:506px;top:935px;width:1px;height:13px;background:#00cdcd;"></div><div style="left:542px;top:935px;width:1px;height:13px;background:#00cdcd;"></div><div style="left:542px;top:941px;width:10px;height:1px;background:#00cdcd;"></div><div style="left:416px;top:948px;width:1px;height:13px;background:#00cdcd;"></div><div style="left:506px;top:948px;width:1px;height:13px;background:#00cdcd;"></div><div style="left:542px;top:948px;width:1px;height:13px;background:#00cdcd;"></div><div style="left:542px;top:954px;width:10px;height:1px;background:#00cdcd;"></div><div style="left:416px;top:961px;width:1px;height:13px;background:#00cdcd;"></div><div style="left:506px;top:961px;width:1px;height:13px;background:#00cdcd;"></div><div style="left:542px;top:961px;width:1px;height:13px;background:#00cdcd;"></div><div style="left:542px;top:967px;width:10px;height:1px;background:#00cdcd;"></div><div style="left:416px;top:974px;width:1px;height:13px;background:#00cdcd;"></div><div style="left:506px;top:974px;width:1px;height:13px;background:#00cdcd;"></div><div style="left:542px;top:974px;width:1px;height:13px;background:#00cdcd;"></div><div style="left:542px;top:980px;width:10px;height:1px;background:#00cdcd;"></div><div style="left:416px;top:987px;width:1px;height:13px;background:#00cdcd;"></div><div style="left:506px;top:987px;width:1px;height:13px;background:#00cdcd;"></div><div style="left:542px;top:987px;width:1px;height:13px;background:#00cdcd;"></div><div style="left:542px;top:993px;width:10px;height:1px;background:#00cdcd;"></div><div style="left:416px;top:1000px;width:1px;height:13px;background:#00cdcd;"></div><div style="left:506px;top:1000px;width:1px;height:13px;background:#00cdcd;"></div><div style="left:542px;top:1000px;width:1px;height:13px;background:#00cdcd;"></div><div style="left:542px;top:1006px;width:10px;height:1px;background:#00cdcd;"></div><div class="tm" style="left:1179px;top:101px"><p style="top:1px"><span style="color:#ffffff">Every 2.Os: sensors        saintveran: Wed Aug 21 21:41:O2 2O24</span></p><p style="top:27px"><span style="color:#ffffff">lm9O-i2c-3-4c</span></p><p style="top:40px"><span style="color:#ffffff">Adapter: nvkm-OOOO:O2:OO.O-bus-OOO2</span></p><p style="top:53px"><span style="color:#ffffff">temp1:        +36.O°C  (low  =  +O.O°C, high = +85.O°C)</span></p><p style="top:66px">                       <span style="color:#ffffff">(crit = +85.O°C, hyst = +75.O°C)</span></p><p style="top:79px"><span style="color:#ffffff">temp2:        +41.9°C  (low  =  +O.O°C, high = +85.2°C)</span></p><p style="top:92px">                       <span style="color:#ffffff">(crit = +85.O°C, hyst = +75.O°C)</span></p><p style="top:118px"><span style="color:#ffffff">iwlwifi_1-virtual-O</span></p><p style="top:131px"><span style="color:#ffffff">Adapter: Virtual device</span></p><p style="top:144px"><span style="color:#ffffff">temp1:        +39.O°C</span></p><p style="top:170px"><span style="color:#ffffff">nouveau-pci-O2OO</span></p><p style="top:183px"><span style="color:#ffffff">Adapter: PCI adapter</span></p><p style="top:196px"><span style="color:#ffffff">GPU core:      1.4O V  (min =  +1.2O V, max =  +1.4O V)</span></p><p style="top:222px"><span style="color:#ffffff">coretemp-isa-OOOO</span></p><p style="top:235px"><span style="color:#ffffff">Adapter: ISA adapter</span></p><p style="top:248px"><span style="color:#ffffff">Core O:       +41.O°C  (high = +8O.O°C, crit = +1OO.O°C)</span></p><p style="top:261px"><span style="color:#ffffff">Core 1:       +36.O°C  (high = +8O.O°C, crit = +1OO.O°C)</span></p><p style="top:274px"><span style="color:#ffffff">Core 2:       +37.O°C  (high = +8O.O°C, crit = +1OO.O°C)</span></p><p style="top:287px"><span style="color:#ffffff">Core 3:       +35.O°C  (high = +8O.O°C, crit = +1OO.O°C)</span></p></div><div style="left:1552px;top:400px;width:6px;height:13px;background:transparent;border:1px solid #00ff00;box-sizing:border-box"></div><svg style="position:absolute;left:1027px;top:576px" width="582" height="312" viewBox="0 0 582 312"><defs><pattern id="cln" width="6" height="13" patternUnits="userSpaceOnUse"><path d="M2 3h2v1h1v1h-1v1h-2v-1h-1v-1h1z M2 8h2v1h1v1h-1v1h-2v-1h-1v-1h1z" fill="#0000ff"/></pattern></defs><rect x="108" y="13" width="42" height="13" fill="url(#cln)"/><rect x="72" y="26" width="114" height="13" fill="url(#cln)"/><rect x="54" y="39" width="150" height="13" fill="url(#cln)"/><rect x="42" y="52" width="48" height="13" fill="url(#cln)"/><rect x="186" y="52" width="36" height="13" fill="url(#cln)"/><rect x="24" y="65" width="54" height="13" fill="url(#cln)"/><rect x="192" y="65" width="42" height="13" fill="url(#cln)"/><rect x="18" y="78" width="48" height="13" fill="url(#cln)"/><rect x="192" y="78" width="54" height="13" fill="url(#cln)"/><rect x="12" y="91" width="54" height="13" fill="url(#cln)"/><rect x="102" y="91" width="48" height="13" fill="url(#cln)"/><rect x="192" y="91" width="60" height="13" fill="url(#cln)"/><rect x="6" y="104" width="60" height="13" fill="url(#cln)"/><rect x="132" y="104" width="30" height="13" fill="url(#cln)"/><rect x="186" y="104" width="72" height="13" fill="url(#cln)"/><rect x="6" y="117" width="66" height="13" fill="url(#cln)"/><rect x="180" y="117" width="78" height="13" fill="url(#cln)"/><rect x="0" y="130" width="84" height="13" fill="url(#cln)"/><rect x="192" y="130" width="72" height="13" fill="url(#cln)"/><rect x="0" y="143" width="60" height="13" fill="url(#cln)"/><rect x="90" y="143" width="30" height="13" fill="url(#cln)"/><rect x="198" y="143" width="66" height="13" fill="url(#cln)"/><rect x="0" y="156" width="60" height="13" fill="url(#cln)"/><rect x="96" y="156" width="60" height="13" fill="url(#cln)"/><rect x="198" y="156" width="66" height="13" fill="url(#cln)"/><rect x="6" y="169" width="30" height="13" fill="url(#cln)"/><rect x="54" y="169" width="6" height="13" fill="url(#cln)"/><rect x="192" y="169" width="66" height="13" fill="url(#cln)"/><rect x="6" y="182" width="30" height="13" fill="url(#cln)"/><rect x="54" y="182" width="6" height="13" fill="url(#cln)"/><rect x="192" y="182" width="66" height="13" fill="url(#cln)"/><rect x="12" y="195" width="24" height="13" fill="url(#cln)"/><rect x="54" y="195" width="6" height="13" fill="url(#cln)"/><rect x="174" y="195" width="78" height="13" fill="url(#cln)"/><rect x="18" y="208" width="18" height="13" fill="url(#cln)"/><rect x="216" y="208" width="30" height="13" fill="url(#cln)"/><rect x="24" y="221" width="12" height="13" fill="url(#cln)"/><rect x="216" y="221" width="24" height="13" fill="url(#cln)"/><rect x="36" y="234" width="192" height="13" fill="url(#cln)"/><rect x="48" y="247" width="168" height="13" fill="url(#cln)"/><rect x="66" y="260" width="132" height="13" fill="url(#cln)"/><rect x="96" y="273" width="72" height="13" fill="url(#cln)"/></svg><div class="tm" style="left:1026px;top:576px"><p style="top:1px"><span style="color:#ffffff">bash-5.1$ neofetch</span></p><p style="top:14px">                                               <span style="color:#0000ff;font-weight:bold;-webkit-text-stroke:0.3px">logout</span><span style="color:#ffffff">@</span><span style="color:#0000ff;font-weight:bold;-webkit-text-stroke:0.3px">saintveran</span></p><p style="top:27px">                                               <span style="color:#ffffff">-----------------</span></p><p style="top:40px">                                               <span style="color:#0000ff;font-weight:bold;-webkit-text-stroke:0.3px">OS</span><span style="color:#ffffff">: Slackware 15.O x86_64 x86_64</span></p><p style="top:53px">               <span style="color:#ffffff;font-weight:bold;-webkit-text-stroke:0.3px">cllcccccllllllll                </span><span style="color:#0000ff;font-weight:bold;-webkit-text-stroke:0.3px">Host</span><span style="color:#ffffff">: MSI MSI X58 Pro-E (MS-7522)</span></p><p style="top:66px">             <span style="color:#ffffff;font-weight:bold;-webkit-text-stroke:0.3px">lc               dc               </span><span style="color:#0000ff;font-weight:bold;-webkit-text-stroke:0.3px">Kernel</span><span style="color:#ffffff">: 5.15.161</span></p><p style="top:79px">           <span style="color:#ffffff;font-weight:bold;-webkit-text-stroke:0.3px">cl   clllccllll    oc               </span><span style="color:#0000ff;font-weight:bold;-webkit-text-stroke:0.3px">Uptime</span><span style="color:#ffffff">: 1O hours, 57 mins</span></p><p style="top:92px">           <span style="color:#ffffff;font-weight:bold;-webkit-text-stroke:0.3px">o   lc        co   oc               </span><span style="color:#0000ff;font-weight:bold;-webkit-text-stroke:0.3px">Packages</span><span style="color:#ffffff">: 12O2 (pkgtool)</span></p><p style="top:105px">           <span style="color:#ffffff;font-weight:bold;-webkit-text-stroke:0.3px">o    cccclc     clcc                </span><span style="color:#0000ff;font-weight:bold;-webkit-text-stroke:0.3px">Shell</span><span style="color:#ffffff">: bash 5.1.16</span></p><p style="top:118px">            <span style="color:#ffffff;font-weight:bold;-webkit-text-stroke:0.3px">lc        cclccclc                 </span><span style="color:#0000ff;font-weight:bold;-webkit-text-stroke:0.3px">Resolution</span><span style="color:#ffffff">: 168Ox1O5O</span></p><p style="top:131px">              <span style="color:#ffffff;font-weight:bold;-webkit-text-stroke:0.3px">lcclcc          lc               </span><span style="color:#0000ff;font-weight:bold;-webkit-text-stroke:0.3px">WM</span><span style="color:#ffffff">: IceWM 2.3.2 (linux-gnu/x86_64)</span></p><p style="top:144px">          <span style="color:#ffffff;font-weight:bold;-webkit-text-stroke:0.3px">cclcc     lccclc     oc              </span><span style="color:#0000ff;font-weight:bold;-webkit-text-stroke:0.3px">WM Theme</span><span style="color:#ffffff">: warp3x</span></p><p style="top:157px">          <span style="color:#ffffff;font-weight:bold;-webkit-text-stroke:0.3px">o    l          l    lc              </span><span style="color:#0000ff;font-weight:bold;-webkit-text-stroke:0.3px">Theme</span><span style="color:#ffffff">: GTK+ [GTK2], Adwaita [GTK3]</span></p><p style="top:170px">      <span style="color:#ffffff;font-weight:bold;-webkit-text-stroke:0.3px">cll o     clcllcccll     o               </span><span style="color:#0000ff;font-weight:bold;-webkit-text-stroke:0.3px">Icons</span><span style="color:#ffffff">: Adwaita [GTK2/3]</span></p><p style="top:183px">      <span style="color:#ffffff;font-weight:bold;-webkit-text-stroke:0.3px">occ o                  clc               </span><span style="color:#0000ff;font-weight:bold;-webkit-text-stroke:0.3px">Terminal</span><span style="color:#ffffff">: urxvt</span></p><p style="top:196px">      <span style="color:#ffffff;font-weight:bold;-webkit-text-stroke:0.3px">ocl ccslclccclclccclclc                  </span><span style="color:#0000ff;font-weight:bold;-webkit-text-stroke:0.3px">CPU</span><span style="color:#ffffff">: Intel i7 95O (8) @ 3.O68GHz</span></p><p style="top:209px">      <span style="color:#ffffff;font-weight:bold;-webkit-text-stroke:0.3px">oclcccccccccccccllllllllllllll           </span><span style="color:#0000ff;font-weight:bold;-webkit-text-stroke:0.3px">GPU</span><span style="color:#ffffff">: NVIDIA Quadro FX 14OO</span></p><p style="top:222px">      <span style="color:#ffffff;font-weight:bold;-webkit-text-stroke:0.3px">lcc1lcccccccccccccccccccccccco           </span><span style="color:#0000ff;font-weight:bold;-webkit-text-stroke:0.3px">Memory</span><span style="color:#ffffff">: 38OOMiB / 24O28MiB</span></p><p style="top:300px"><span style="color:#ffffff">bash-5.1$</span></p></div><div style="left:1309px;top:823px;width:18px;height:13px;background:#000000;"></div><div style="left:1309px;top:836px;width:18px;height:13px;background:#4d4d4d;"></div><div style="left:1327px;top:823px;width:18px;height:13px;background:#cd0000;"></div><div style="left:1327px;top:836px;width:18px;height:13px;background:#ff0000;"></div><div style="left:1345px;top:823px;width:18px;height:13px;background:#00cd00;"></div><div style="left:1345px;top:836px;width:18px;height:13px;background:#00ff00;"></div><div style="left:1363px;top:823px;width:18px;height:13px;background:#cdcd00;"></div><div style="left:1363px;top:836px;width:18px;height:13px;background:#ffff00;"></div><div style="left:1381px;top:823px;width:18px;height:13px;background:#0000cd;"></div><div style="left:1381px;top:836px;width:18px;height:13px;background:#0000ff;"></div><div style="left:1399px;top:823px;width:18px;height:13px;background:#cd00cd;"></div><div style="left:1399px;top:836px;width:18px;height:13px;background:#ff00ff;"></div><div style="left:1417px;top:823px;width:18px;height:13px;background:#00cdcd;"></div><div style="left:1417px;top:836px;width:18px;height:13px;background:#00ffff;"></div><div style="left:1435px;top:823px;width:18px;height:13px;background:#e5e5e5;"></div><div style="left:1435px;top:836px;width:18px;height:13px;background:#ffffff;"></div><div style="left:1087px;top:875px;width:6px;height:13px;background:#00ff00;"></div></body></html>
